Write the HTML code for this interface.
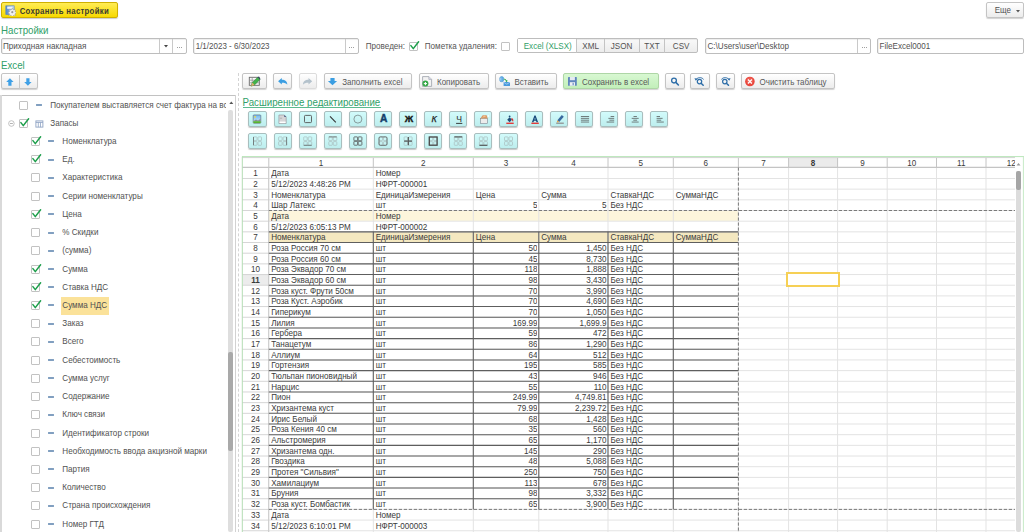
<!DOCTYPE html><html><head><meta charset="utf-8"><style>
html,body{margin:0;padding:0}
body{width:1024px;height:532px;overflow:hidden;position:relative;background:#fff;font-family:"Liberation Sans",sans-serif;color:#515151}
.t{position:absolute;white-space:nowrap}
.r{position:absolute;box-sizing:border-box}
.btn{position:absolute;box-sizing:border-box;border:1px solid #c4c4c4;border-radius:2px;background:linear-gradient(#ffffff,#ececec);box-shadow:0 1px 1px rgba(0,0,0,0.18)}
.fb{position:absolute;box-sizing:border-box;border:1px solid #a9bebe;border-radius:2px;background:linear-gradient(#d2fbfb,#bdeeee);box-shadow:0 1px 1px rgba(0,0,0,0.22)}
.inp{position:absolute;box-sizing:border-box;border:1px solid #bdbdbd;border-radius:2px;background:#fff;box-shadow:inset 1px 1px 1px rgba(0,0,0,0.07)}
.cb{position:absolute;box-sizing:border-box;width:9px;height:9px;border:1px solid #c2c2c2;border-radius:1px;background:#fff}
</style></head><body>
<div class="r" style="left:1px;top:2px;width:117px;height:16px;border:1px solid #cfb000;border-radius:2px;background:linear-gradient(#ffec55,#f7d900);box-shadow:0 1px 1px rgba(0,0,0,0.2)"></div><svg class="r" style="left:4.50px;top:4.50px" width="11" height="11" viewBox="0 0 11 11"><defs><linearGradient id="dg" x1="0" y1="0" x2="1" y2="0"><stop offset="0" stop-color="#4f86cc"/><stop offset="1" stop-color="#b8d4f2"/></linearGradient></defs><rect x="0.8" y="0.8" width="8.4" height="8.8" fill="url(#dg)" stroke="#5d86bb" stroke-width="0.6"/><rect x="2.2" y="1.6" width="5.4" height="2.2" fill="#eef4fb"/><path d="M6.9 3.6 l0.9 0 l0.3 1 l0.9 0.4 l0.9 -0.6 l0.7 0.7 l-0.6 0.9 l0.4 0.9 l1 0.3 l0 1 l-1 0.3 l-0.4 0.9 l0.6 0.9 l-0.7 0.7 l-0.9 -0.6 l-0.9 0.4 l-0.3 1 l-1 0 l-0.3 -1 l-0.9 -0.4 l-0.9 0.6 l-0.7 -0.7 l0.6 -0.9 l-0.4 -0.9 l-1 -0.3 l0 -1 l1 -0.3 l0.4 -0.9 l-0.6 -0.9 l0.7 -0.7 l0.9 0.6 l0.9 -0.4Z" fill="#f0f0f0" stroke="#8a8a8a" stroke-width="0.5"/><circle cx="7.3" cy="7.2" r="1.1" fill="#9a9a9a"/></svg><div class="t" style="left:19.70px;top:7.90px;font-size:7.8px;line-height:7.8px;transform:scaleY(1.16);transform-origin:0 6.60px;letter-spacing:0.27px;color:#3b3b30;font-weight:700;">Сохранить настройки</div><div class="btn" style="left:986px;top:2px;width:38px;height:16px"></div><div class="t" style="left:994.70px;top:7.33px;font-size:8px;line-height:8px;transform:scaleY(1.12);transform-origin:0 6.77px;">Еще</div><svg class="r" style="left:1015.50px;top:9.50px" width="4" height="3" viewBox="0 0 4 3"><path d="M0 0 L4 0 L2 2.5Z" fill="#555"/></svg><div class="t" style="left:1.00px;top:26.29px;font-size:9.7px;line-height:9.7px;transform:scaleY(1.15);transform-origin:0 8.21px;color:#30a068;">Настройки</div><div class="inp" style="left:1px;top:38px;width:186px;height:16px"></div><div class="r" style="left:159.00px;top:39.00px;width:1.00px;height:14.00px;background:#c9c9c9"></div><div class="r" style="left:172.30px;top:39.00px;width:1.00px;height:14.00px;background:#c9c9c9"></div><svg class="r" style="left:164.00px;top:45.00px" width="4" height="3" viewBox="0 0 4 3"><path d="M0 0 L4 0 L2 2.5Z" fill="#444"/></svg><div class="r" style="left:177.00px;top:47.30px;width:1.20px;height:1.20px;background:#a0a0a0"></div><div class="r" style="left:179.00px;top:47.30px;width:1.20px;height:1.20px;background:#a0a0a0"></div><div class="r" style="left:181.00px;top:47.30px;width:1.20px;height:1.20px;background:#a0a0a0"></div><div class="t" style="left:3.00px;top:42.94px;font-size:8.1px;line-height:8.1px;transform:scaleY(1.12);transform-origin:0 6.86px;">Приходная накладная</div><div class="inp" style="left:193px;top:38px;width:165.5px;height:16px"></div><div class="r" style="left:345.00px;top:39.00px;width:1.00px;height:14.00px;background:#c9c9c9"></div><div class="r" style="left:348.80px;top:47.30px;width:1.20px;height:1.20px;background:#a0a0a0"></div><div class="r" style="left:350.80px;top:47.30px;width:1.20px;height:1.20px;background:#a0a0a0"></div><div class="r" style="left:352.80px;top:47.30px;width:1.20px;height:1.20px;background:#a0a0a0"></div><div class="t" style="left:195.70px;top:43.03px;font-size:8px;line-height:8px;transform:scaleY(1.12);transform-origin:0 6.77px;">1/1/2023 - 6/30/2023</div><div class="t" style="left:365.80px;top:42.94px;font-size:8.1px;line-height:8.1px;transform:scaleY(1.12);transform-origin:0 6.86px;color:#555;">Проведен:</div><div class="cb" style="left:409px;top:41.8px;width:9px;height:9px"></div><svg class="r" style="left:409.00px;top:39.80px" width="11" height="11" viewBox="0 0 11 11"><path d="M1.9 5.6 L4.3 8.6 L9.6 1.8" fill="none" stroke="#1c9e4a" stroke-width="1.5" stroke-linecap="round" stroke-linejoin="round"/></svg><div class="t" style="left:424.80px;top:42.94px;font-size:8.1px;line-height:8.1px;transform:scaleY(1.12);transform-origin:0 6.86px;color:#555;">Пометка удаления:</div><div class="cb" style="left:501.2px;top:41.5px;width:9px;height:9px"></div><div class="inp" style="left:517px;top:38.3px;width:180.5px;height:15.2px;background:linear-gradient(#f9f9f9,#ececec)"></div><div class="r" style="left:518.00px;top:39.30px;width:58.40px;height:13.20px;background:#fff"></div><div class="r" style="left:576.20px;top:39.00px;width:1.00px;height:14.00px;background:#c4c4c4"></div><div class="r" style="left:604.00px;top:39.00px;width:1.00px;height:14.00px;background:#c4c4c4"></div><div class="r" style="left:638.60px;top:39.00px;width:1.00px;height:14.00px;background:#c4c4c4"></div><div class="r" style="left:664.00px;top:39.00px;width:1.00px;height:14.00px;background:#c4c4c4"></div><div class="t" style="left:523.70px;top:42.94px;font-size:8.1px;line-height:8.1px;transform:scaleY(1.12);transform-origin:0 6.86px;color:#30a068;">Excel (XLSX)</div><div class="t" style="left:582.30px;top:42.94px;font-size:8.1px;line-height:8.1px;transform:scaleY(1.12);transform-origin:0 6.86px;">XML</div><div class="t" style="left:610.80px;top:42.94px;font-size:8.1px;line-height:8.1px;transform:scaleY(1.12);transform-origin:0 6.86px;">JSON</div><div class="t" style="left:644.30px;top:42.94px;font-size:8.1px;line-height:8.1px;transform:scaleY(1.12);transform-origin:0 6.86px;">TXT</div><div class="t" style="left:672.80px;top:42.94px;font-size:8.1px;line-height:8.1px;transform:scaleY(1.12);transform-origin:0 6.86px;">CSV</div><div class="inp" style="left:704.5px;top:38px;width:166px;height:16px"></div><div class="r" style="left:857.00px;top:39.00px;width:1.00px;height:14.00px;background:#c9c9c9"></div><div class="r" style="left:861.60px;top:47.30px;width:1.20px;height:1.20px;background:#a0a0a0"></div><div class="r" style="left:863.60px;top:47.30px;width:1.20px;height:1.20px;background:#a0a0a0"></div><div class="r" style="left:865.60px;top:47.30px;width:1.20px;height:1.20px;background:#a0a0a0"></div><div class="t" style="left:707.50px;top:42.94px;font-size:8.1px;line-height:8.1px;transform:scaleY(1.12);transform-origin:0 6.86px;">C:\Users\user\Desktop</div><div class="inp" style="left:877.3px;top:38px;width:146.5px;height:16px"></div><div class="t" style="left:879.50px;top:42.94px;font-size:8.1px;line-height:8.1px;transform:scaleY(1.12);transform-origin:0 6.86px;">FileExcel0001</div><div class="t" style="left:1.00px;top:61.29px;font-size:9.7px;line-height:9.7px;transform:scaleY(1.15);transform-origin:0 8.21px;color:#30a068;">Excel</div><div class="btn" style="left:1px;top:73.1px;width:37px;height:16px"></div><div class="r" style="left:19.40px;top:74.60px;width:1.00px;height:14.00px;background:#c8c8c8"></div><svg class="r" style="left:6.00px;top:77.50px" width="8" height="8" viewBox="0 0 8 8"><path d="M3.9 0.2 L7.6 4.0 L5.5 4.0 L5.5 7.8 L2.3 7.8 L2.3 4.0 L0.2 4.0Z" fill="#3fa0e6"/></svg><svg class="r" style="left:24.20px;top:77.50px" width="8" height="8" viewBox="0 0 8 8"><path d="M3.9 7.8 L7.6 4.0 L5.5 4.0 L5.5 0.2 L2.3 0.2 L2.3 4.0 L0.2 4.0Z" fill="#3fa0e6"/></svg><div class="r" style="left:238px;top:73px;width:1px;height:459px;border-left:1px dashed #d4d4d4"></div><div class="r" style="left:0.00px;top:95.00px;width:236.00px;height:1.00px;background:#c2c2c2"></div><div class="r" style="left:0.00px;top:95.00px;width:1.70px;height:437.00px;background:#d9d9d9"></div><div class="r" style="left:234.50px;top:95.00px;width:1.00px;height:437.00px;background:#d2d2d2"></div><div class="r" style="left:228.30px;top:110.00px;width:4.40px;height:422.00px;background:#dedede;border-radius:2px"></div><div class="r" style="left:228.30px;top:352.00px;width:4.40px;height:99.00px;background:#a9a9a9;border-radius:2px"></div><svg class="r" style="left:228.50px;top:101.00px" width="5" height="4" viewBox="0 0 5 4"><path d="M0.3 3 L4.3 3 L2.3 0.6Z" fill="#555"/></svg><div class="cb" style="left:19.20px;top:100.60px"></div><div class="r" style="left:35.90px;top:104.00px;width:6.30px;height:2.00px;background:#819fc0;border-radius:1px;box-shadow:0 0 0.6px #819fc0"></div><div class="t" style="left:50.30px;top:101.54px;font-size:8.1px;line-height:8.1px;transform:scaleY(1.11);transform-origin:0 6.86px;width:176.20px;overflow:hidden;">Покупателем выставляется счет фактура на вс</div><div class="cb" style="left:19.20px;top:118.82px"></div><svg class="r" style="left:19.20px;top:116.82px" width="11" height="11" viewBox="0 0 11 11"><path d="M1.9 5.6 L4.3 8.6 L9.6 1.8" fill="none" stroke="#1c9e4a" stroke-width="1.5" stroke-linecap="round" stroke-linejoin="round"/></svg><svg class="r" style="left:35.00px;top:119.62px" width="9" height="8" viewBox="0 0 9 8"><rect x="0.9" y="0.9" width="7" height="6.2" fill="#fff" stroke="#8fa3c4" stroke-width="0.9"/><line x1="0.9" y1="2.4" x2="7.9" y2="2.4" stroke="#8fa3c4" stroke-width="0.9"/><line x1="3.3" y1="2.4" x2="3.3" y2="7.1" stroke="#8fa3c4" stroke-width="0.8"/><line x1="5.5" y1="2.4" x2="5.5" y2="7.1" stroke="#8fa3c4" stroke-width="0.8"/></svg><svg class="r" style="left:7.50px;top:119.72px" width="7" height="7" viewBox="0 0 7 7"><circle cx="3.4" cy="3.5" r="2.8" fill="none" stroke="#b4b4b4" stroke-width="0.8"/><line x1="1.9" y1="3.5" x2="4.9" y2="3.5" stroke="#a0a0a0" stroke-width="0.8"/></svg><div class="t" style="left:50.30px;top:119.76px;font-size:8.1px;line-height:8.1px;transform:scaleY(1.11);transform-origin:0 6.86px;width:176.20px;overflow:hidden;">Запасы</div><div class="cb" style="left:31.20px;top:137.04px"></div><svg class="r" style="left:31.20px;top:135.04px" width="11" height="11" viewBox="0 0 11 11"><path d="M1.9 5.6 L4.3 8.6 L9.6 1.8" fill="none" stroke="#1c9e4a" stroke-width="1.5" stroke-linecap="round" stroke-linejoin="round"/></svg><div class="r" style="left:47.70px;top:140.00px;width:6.30px;height:2.00px;background:#819fc0;border-radius:1px;box-shadow:0 0 0.6px #819fc0"></div><div class="t" style="left:62.30px;top:137.98px;font-size:8.1px;line-height:8.1px;transform:scaleY(1.11);transform-origin:0 6.86px;">Номенклатура</div><div class="cb" style="left:31.20px;top:155.26px"></div><svg class="r" style="left:31.20px;top:153.26px" width="11" height="11" viewBox="0 0 11 11"><path d="M1.9 5.6 L4.3 8.6 L9.6 1.8" fill="none" stroke="#1c9e4a" stroke-width="1.5" stroke-linecap="round" stroke-linejoin="round"/></svg><div class="r" style="left:47.70px;top:159.00px;width:6.30px;height:2.00px;background:#819fc0;border-radius:1px;box-shadow:0 0 0.6px #819fc0"></div><div class="t" style="left:62.30px;top:156.20px;font-size:8.1px;line-height:8.1px;transform:scaleY(1.11);transform-origin:0 6.86px;">Ед.</div><div class="cb" style="left:31.20px;top:173.48px"></div><div class="r" style="left:47.70px;top:177.00px;width:6.30px;height:2.00px;background:#819fc0;border-radius:1px;box-shadow:0 0 0.6px #819fc0"></div><div class="t" style="left:62.30px;top:174.42px;font-size:8.1px;line-height:8.1px;transform:scaleY(1.11);transform-origin:0 6.86px;">Характеристика</div><div class="cb" style="left:31.20px;top:191.70px"></div><div class="r" style="left:47.70px;top:195.00px;width:6.30px;height:2.00px;background:#819fc0;border-radius:1px;box-shadow:0 0 0.6px #819fc0"></div><div class="t" style="left:62.30px;top:192.64px;font-size:8.1px;line-height:8.1px;transform:scaleY(1.11);transform-origin:0 6.86px;">Серии номенклатуры</div><div class="cb" style="left:31.20px;top:209.92px"></div><svg class="r" style="left:31.20px;top:207.92px" width="11" height="11" viewBox="0 0 11 11"><path d="M1.9 5.6 L4.3 8.6 L9.6 1.8" fill="none" stroke="#1c9e4a" stroke-width="1.5" stroke-linecap="round" stroke-linejoin="round"/></svg><div class="r" style="left:47.70px;top:213.00px;width:6.30px;height:2.00px;background:#819fc0;border-radius:1px;box-shadow:0 0 0.6px #819fc0"></div><div class="t" style="left:62.30px;top:210.86px;font-size:8.1px;line-height:8.1px;transform:scaleY(1.11);transform-origin:0 6.86px;">Цена</div><div class="cb" style="left:31.20px;top:228.14px"></div><div class="r" style="left:47.70px;top:232.00px;width:6.30px;height:2.00px;background:#819fc0;border-radius:1px;box-shadow:0 0 0.6px #819fc0"></div><div class="t" style="left:62.30px;top:229.08px;font-size:8.1px;line-height:8.1px;transform:scaleY(1.11);transform-origin:0 6.86px;">% Скидки</div><div class="cb" style="left:31.20px;top:246.36px"></div><div class="r" style="left:47.70px;top:250.00px;width:6.30px;height:2.00px;background:#819fc0;border-radius:1px;box-shadow:0 0 0.6px #819fc0"></div><div class="t" style="left:62.30px;top:247.30px;font-size:8.1px;line-height:8.1px;transform:scaleY(1.11);transform-origin:0 6.86px;">(сумма)</div><div class="cb" style="left:31.20px;top:264.58px"></div><svg class="r" style="left:31.20px;top:262.58px" width="11" height="11" viewBox="0 0 11 11"><path d="M1.9 5.6 L4.3 8.6 L9.6 1.8" fill="none" stroke="#1c9e4a" stroke-width="1.5" stroke-linecap="round" stroke-linejoin="round"/></svg><div class="r" style="left:47.70px;top:268.00px;width:6.30px;height:2.00px;background:#819fc0;border-radius:1px;box-shadow:0 0 0.6px #819fc0"></div><div class="t" style="left:62.30px;top:265.52px;font-size:8.1px;line-height:8.1px;transform:scaleY(1.11);transform-origin:0 6.86px;">Сумма</div><div class="cb" style="left:31.20px;top:282.80px"></div><svg class="r" style="left:31.20px;top:280.80px" width="11" height="11" viewBox="0 0 11 11"><path d="M1.9 5.6 L4.3 8.6 L9.6 1.8" fill="none" stroke="#1c9e4a" stroke-width="1.5" stroke-linecap="round" stroke-linejoin="round"/></svg><div class="r" style="left:47.70px;top:286.00px;width:6.30px;height:2.00px;background:#819fc0;border-radius:1px;box-shadow:0 0 0.6px #819fc0"></div><div class="t" style="left:62.30px;top:283.74px;font-size:8.1px;line-height:8.1px;transform:scaleY(1.11);transform-origin:0 6.86px;">Ставка НДС</div><div class="r" style="left:61.00px;top:296.62px;width:48.30px;height:18.00px;background:#fbe29a"></div><div class="cb" style="left:31.20px;top:301.02px"></div><svg class="r" style="left:31.20px;top:299.02px" width="11" height="11" viewBox="0 0 11 11"><path d="M1.9 5.6 L4.3 8.6 L9.6 1.8" fill="none" stroke="#1c9e4a" stroke-width="1.5" stroke-linecap="round" stroke-linejoin="round"/></svg><div class="r" style="left:47.70px;top:304.00px;width:6.30px;height:2.00px;background:#819fc0;border-radius:1px;box-shadow:0 0 0.6px #819fc0"></div><div class="t" style="left:62.30px;top:301.96px;font-size:8.1px;line-height:8.1px;transform:scaleY(1.11);transform-origin:0 6.86px;">Сумма НДС</div><div class="cb" style="left:31.20px;top:319.24px"></div><div class="r" style="left:47.70px;top:323.00px;width:6.30px;height:2.00px;background:#819fc0;border-radius:1px;box-shadow:0 0 0.6px #819fc0"></div><div class="t" style="left:62.30px;top:320.18px;font-size:8.1px;line-height:8.1px;transform:scaleY(1.11);transform-origin:0 6.86px;">Заказ</div><div class="cb" style="left:31.20px;top:337.46px"></div><div class="r" style="left:47.70px;top:341.00px;width:6.30px;height:2.00px;background:#819fc0;border-radius:1px;box-shadow:0 0 0.6px #819fc0"></div><div class="t" style="left:62.30px;top:338.40px;font-size:8.1px;line-height:8.1px;transform:scaleY(1.11);transform-origin:0 6.86px;">Всего</div><div class="cb" style="left:31.20px;top:355.68px"></div><div class="r" style="left:47.70px;top:359.00px;width:6.30px;height:2.00px;background:#819fc0;border-radius:1px;box-shadow:0 0 0.6px #819fc0"></div><div class="t" style="left:62.30px;top:356.62px;font-size:8.1px;line-height:8.1px;transform:scaleY(1.11);transform-origin:0 6.86px;">Себестоимость</div><div class="cb" style="left:31.20px;top:373.90px"></div><div class="r" style="left:47.70px;top:377.00px;width:6.30px;height:2.00px;background:#819fc0;border-radius:1px;box-shadow:0 0 0.6px #819fc0"></div><div class="t" style="left:62.30px;top:374.84px;font-size:8.1px;line-height:8.1px;transform:scaleY(1.11);transform-origin:0 6.86px;">Сумма услуг</div><div class="cb" style="left:31.20px;top:392.12px"></div><div class="r" style="left:47.70px;top:396.00px;width:6.30px;height:2.00px;background:#819fc0;border-radius:1px;box-shadow:0 0 0.6px #819fc0"></div><div class="t" style="left:62.30px;top:393.06px;font-size:8.1px;line-height:8.1px;transform:scaleY(1.11);transform-origin:0 6.86px;">Содержание</div><div class="cb" style="left:31.20px;top:410.34px"></div><div class="r" style="left:47.70px;top:414.00px;width:6.30px;height:2.00px;background:#819fc0;border-radius:1px;box-shadow:0 0 0.6px #819fc0"></div><div class="t" style="left:62.30px;top:411.28px;font-size:8.1px;line-height:8.1px;transform:scaleY(1.11);transform-origin:0 6.86px;">Ключ связи</div><div class="cb" style="left:31.20px;top:428.56px"></div><div class="r" style="left:47.70px;top:432.00px;width:6.30px;height:2.00px;background:#819fc0;border-radius:1px;box-shadow:0 0 0.6px #819fc0"></div><div class="t" style="left:62.30px;top:429.50px;font-size:8.1px;line-height:8.1px;transform:scaleY(1.11);transform-origin:0 6.86px;">Идентификатор строки</div><div class="cb" style="left:31.20px;top:446.78px"></div><div class="r" style="left:47.70px;top:450.00px;width:6.30px;height:2.00px;background:#819fc0;border-radius:1px;box-shadow:0 0 0.6px #819fc0"></div><div class="t" style="left:62.30px;top:447.72px;font-size:8.1px;line-height:8.1px;transform:scaleY(1.11);transform-origin:0 6.86px;">Необходимость ввода акцизной марки</div><div class="cb" style="left:31.20px;top:465.00px"></div><div class="r" style="left:47.70px;top:468.00px;width:6.30px;height:2.00px;background:#819fc0;border-radius:1px;box-shadow:0 0 0.6px #819fc0"></div><div class="t" style="left:62.30px;top:465.94px;font-size:8.1px;line-height:8.1px;transform:scaleY(1.11);transform-origin:0 6.86px;">Партия</div><div class="cb" style="left:31.20px;top:483.22px"></div><div class="r" style="left:47.70px;top:487.00px;width:6.30px;height:2.00px;background:#819fc0;border-radius:1px;box-shadow:0 0 0.6px #819fc0"></div><div class="t" style="left:62.30px;top:484.16px;font-size:8.1px;line-height:8.1px;transform:scaleY(1.11);transform-origin:0 6.86px;">Количество</div><div class="cb" style="left:31.20px;top:501.44px"></div><div class="r" style="left:47.70px;top:505.00px;width:6.30px;height:2.00px;background:#819fc0;border-radius:1px;box-shadow:0 0 0.6px #819fc0"></div><div class="t" style="left:62.30px;top:502.38px;font-size:8.1px;line-height:8.1px;transform:scaleY(1.11);transform-origin:0 6.86px;">Страна происхождения</div><div class="cb" style="left:31.20px;top:519.66px"></div><div class="r" style="left:47.70px;top:523.00px;width:6.30px;height:2.00px;background:#819fc0;border-radius:1px;box-shadow:0 0 0.6px #819fc0"></div><div class="t" style="left:62.30px;top:520.60px;font-size:8.1px;line-height:8.1px;transform:scaleY(1.11);transform-origin:0 6.86px;">Номер ГТД</div><div class="btn" style="left:242.10px;top:73.10px;width:25.00px;height:16.00px;"></div><div class="btn" style="left:273.40px;top:73.10px;width:18.60px;height:16.00px;"></div><div class="btn" style="left:298.50px;top:73.10px;width:18.60px;height:16.00px;border-color:#dcdcdc;box-shadow:0 1px 1px rgba(0,0,0,0.08)"></div><div class="btn" style="left:323.50px;top:73.10px;width:88.60px;height:16.00px;"></div><div class="t" style="left:342.25px;top:78.53px;font-size:8px;line-height:8px;transform:scaleY(1.12);transform-origin:0 6.77px;color:#585858;">Заполнить excel</div><div class="btn" style="left:418.50px;top:73.10px;width:70.60px;height:16.00px;"></div><div class="t" style="left:437.00px;top:78.53px;font-size:8px;line-height:8px;transform:scaleY(1.12);transform-origin:0 6.77px;color:#585858;">Копировать</div><div class="btn" style="left:495.30px;top:73.10px;width:61.60px;height:16.00px;"></div><div class="t" style="left:514.50px;top:78.53px;font-size:8px;line-height:8px;transform:scaleY(1.12);transform-origin:0 6.77px;color:#585858;">Вставить</div><div class="btn" style="left:563.25px;top:73.10px;width:96.10px;height:16.00px;background:linear-gradient(#d8f8d2,#c2efba);border-color:#aed6a6"></div><div class="t" style="left:582.00px;top:78.53px;font-size:8px;line-height:8px;transform:scaleY(1.12);transform-origin:0 6.77px;color:#585858;">Сохранить в excel</div><div class="btn" style="left:665.25px;top:73.10px;width:19.35px;height:16.00px;"></div><div class="btn" style="left:690.25px;top:73.10px;width:19.85px;height:16.00px;"></div><div class="btn" style="left:715.75px;top:73.10px;width:19.35px;height:16.00px;"></div><div class="btn" style="left:741.25px;top:73.10px;width:93.60px;height:16.00px;"></div><div class="t" style="left:759.50px;top:78.53px;font-size:8px;line-height:8px;transform:scaleY(1.12);transform-origin:0 6.77px;color:#585858;">Очистить таблицу</div><div class="t" style="left:242.60px;top:97.79px;font-size:9.7px;line-height:9.7px;transform:scaleY(1.15);transform-origin:0 8.21px;color:#30a068;">Расширенное редактирование</div><div class="r" style="left:242.60px;top:107.00px;width:138.20px;height:1.00px;background:#5bbb8f"></div><div class="fb" style="left:248.40px;top:111.10px;width:18.20px;height:16.20px;"></div><div class="fb" style="left:273.50px;top:111.10px;width:18.20px;height:16.20px;"></div><div class="fb" style="left:298.60px;top:111.10px;width:18.20px;height:16.20px;"></div><div class="fb" style="left:323.70px;top:111.10px;width:18.20px;height:16.20px;"></div><div class="fb" style="left:348.80px;top:111.10px;width:18.20px;height:16.20px;"></div><div class="fb" style="left:373.90px;top:111.10px;width:18.20px;height:16.20px;"></div><div class="fb" style="left:399.00px;top:111.10px;width:18.20px;height:16.20px;"></div><div class="fb" style="left:424.10px;top:111.10px;width:18.20px;height:16.20px;"></div><div class="fb" style="left:449.20px;top:111.10px;width:18.20px;height:16.20px;"></div><div class="fb" style="left:474.30px;top:111.10px;width:18.20px;height:16.20px;"></div><div class="fb" style="left:499.40px;top:111.10px;width:18.20px;height:16.20px;"></div><div class="fb" style="left:524.50px;top:111.10px;width:18.20px;height:16.20px;"></div><div class="fb" style="left:549.60px;top:111.10px;width:18.20px;height:16.20px;"></div><div class="fb" style="left:574.70px;top:111.10px;width:18.20px;height:16.20px;"></div><div class="fb" style="left:599.80px;top:111.10px;width:18.20px;height:16.20px;"></div><div class="fb" style="left:624.90px;top:111.10px;width:18.20px;height:16.20px;"></div><div class="fb" style="left:650.00px;top:111.10px;width:18.20px;height:16.20px;"></div><div class="fb" style="left:248.40px;top:133.00px;width:18.20px;height:16.10px;"></div><div class="fb" style="left:273.50px;top:133.00px;width:18.20px;height:16.10px;"></div><div class="fb" style="left:298.60px;top:133.00px;width:18.20px;height:16.10px;"></div><div class="fb" style="left:323.70px;top:133.00px;width:18.20px;height:16.10px;"></div><div class="fb" style="left:348.80px;top:133.00px;width:18.20px;height:16.10px;"></div><div class="fb" style="left:373.90px;top:133.00px;width:18.20px;height:16.10px;"></div><div class="fb" style="left:399.00px;top:133.00px;width:18.20px;height:16.10px;"></div><div class="fb" style="left:424.10px;top:133.00px;width:18.20px;height:16.10px;"></div><div class="fb" style="left:449.20px;top:133.00px;width:18.20px;height:16.10px;"></div><div class="fb" style="left:474.30px;top:133.00px;width:18.20px;height:16.10px;"></div><div class="fb" style="left:499.40px;top:133.00px;width:18.20px;height:16.10px;"></div><svg class="r" style="left:0;top:0" width="1024" height="532" viewBox="0 0 1024 532"><rect x="249.3" y="77.3" width="10" height="8" fill="#fafafa" stroke="#6a6a6a" stroke-width="0.9"/><path d="M249.3 80.2H259.3M249.3 82.8H259.3M252.2 77.3V85.3" stroke="#8a8a8a" stroke-width="0.7"/><path d="M251.2 86.2 L252.3 82.6 L257.6 77.3 L259.9 79.6 L254.6 84.9Z" fill="#41b34b" stroke="#2c7a35" stroke-width="0.5"/><path d="M251.2 86.2 L252.3 82.6 L254.6 84.9Z" fill="#e2ad6b"/><path d="M257.6 77.3 L259.9 79.6 L260.6 78.9 L258.3 76.6Z" fill="#2b3f63"/><path d="M278.1 81.2 L281.8 77.9 L281.8 79.7 C285.2 79.7 287.3 81.3 287.3 84.8 C286.2 83.3 284.6 82.8 281.8 82.8 L281.8 84.6Z" fill="#3b9ee2"/><path d="M312.2 81.2 L308.5 77.9 L308.5 79.7 C305.1 79.7 303 81.3 303 84.8 C304.1 83.3 305.7 82.8 308.5 82.8 L308.5 84.6Z" fill="#b4c2cc"/><path d="M330.4 77.9 H334.6 V81.1 H337.1 L332.5 85.3 L327.9 81.1 H330.4Z" fill="#3b9ee2"/><path d="M422.6 76.6 H428.8 L431.6 79.4 V86.4 H422.6Z" fill="#f3f3f3" stroke="#9aa0a8" stroke-width="0.8"/><path d="M428.8 76.6 V79.4 H431.6" fill="#dde" stroke="#9aa0a8" stroke-width="0.6"/><circle cx="425.4" cy="83.6" r="3" fill="#33a845"/><path d="M425.4 82 V85.2 M423.8 83.6 H427" stroke="#fff" stroke-width="1"/><rect x="499.8" y="76.6" width="3.8" height="5.2" rx="1.6" fill="#62aee8" stroke="#3f8ccc" stroke-width="0.5"/><path d="M500.8 77.6 V80.6" stroke="#cfe8fa" stroke-width="0.7"/><path d="M503.8 79.2 C505.4 79.2 506.2 79.6 506.4 81" fill="none" stroke="#2fa84a" stroke-width="1"/><path d="M505.2 80.6 L506.5 82.2 L507.8 80.6Z" fill="#2fa84a"/><rect x="503.6" y="82" width="6.4" height="4" fill="#4a9ade"/><path d="M503.6 82.2 L506.8 84.2 L510 82.2" fill="none" stroke="#d5e8f8" stroke-width="0.6"/><rect x="568" y="77" width="8.8" height="8.8" rx="0.6" fill="#5f86bd"/><rect x="569.9" y="77" width="5" height="3.2" fill="#e4eaf2"/><rect x="569.8" y="82.2" width="5.2" height="3.6" fill="#eef0f3"/><rect x="572.6" y="82.8" width="1.1" height="2.4" fill="#5f86bd"/><circle cx="674.0" cy="80.6" r="2.4" fill="none" stroke="#2e6ea8" stroke-width="1.3"/><path d="M675.8 82.4 L678.4 85" stroke="#2e6ea8" stroke-width="1.6" stroke-linecap="round"/><circle cx="699.5" cy="81.6" r="2.2" fill="none" stroke="#2e6ea8" stroke-width="1.2"/><path d="M701.1 83.2 L703.2 85.3" stroke="#2e6ea8" stroke-width="1.5" stroke-linecap="round"/><path d="M696.2 79.6 C697.5 77.3 701.5 76.8 703.6 79.4" fill="none" stroke="#2e6ea8" stroke-width="1"/><path d="M694.4 78.2 L697.6 78.6 L695.8 80.8Z" fill="#2e6ea8"/><circle cx="724.8" cy="81.6" r="2.2" fill="none" stroke="#2e6ea8" stroke-width="1.2"/><path d="M726.4 83.2 L728.5 85.3" stroke="#2e6ea8" stroke-width="1.5" stroke-linecap="round"/><path d="M721.4 79.4 C723.5 76.8 727.5 77.3 728.8 79.6" fill="none" stroke="#2e6ea8" stroke-width="1"/><path d="M730.6 78.2 L727.4 78.6 L729.2 80.8Z" fill="#2e6ea8"/><circle cx="749.9" cy="81.5" r="4.8" fill="#e9473d"/><circle cx="749.9" cy="80.5" r="3.2" fill="#f26a60" opacity="0.6"/><path d="M747.9 79.5 L751.9 83.5 M751.9 79.5 L747.9 83.5" stroke="#fff" stroke-width="1.2"/><g transform="translate(0.00 0)"><defs><linearGradient id="sky" x1="0" y1="0" x2="0" y2="1"><stop offset="0" stop-color="#6fb6f0"/><stop offset="1" stop-color="#d9eefc"/></linearGradient></defs><rect x="253.2" y="114.9" width="7.6" height="8.4" rx="0.8" fill="url(#sky)" stroke="#5a6470" stroke-width="0.6"/><circle cx="255.1" cy="116.8" r="0.9" fill="#f2df3a"/><path d="M253.4 121 L256 119.4 L258 120.4 L260.6 118.8 V121.2 H253.4Z" fill="#8a8f96"/><rect x="253.4" y="121.2" width="7.2" height="1.9" fill="#58b42e"/></g><g transform="translate(0.10 0)"><path d="M278.8 115 H284.2 L286.1 116.9 V123.5 H278.8Z" fill="#d6d6d8" stroke="#8d8f96" stroke-width="0.6"/><path d="M284.2 115 V116.9 H286.1Z" fill="#3a4f7a"/><rect x="279.4" y="121.6" width="6.1" height="1.5" fill="#fff"/><path d="M279.8 118.2 H282" stroke="#999" stroke-width="0.6"/></g><g transform="translate(0.20 0)"><rect x="304.3" y="115.4" width="7" height="7.2" rx="0.9" fill="none" stroke="#555" stroke-width="0.9"/></g><g transform="translate(0.30 0)"><path d="M329.7 116.4 L335.5 122.4" stroke="#333" stroke-width="1.1"/></g><g transform="translate(0.40 0)"><circle cx="357.5" cy="119.1" r="4" fill="none" stroke="#6d7777" stroke-width="0.7"/></g><g transform="translate(0.50 0)"><text x="383.3" y="122.2" text-anchor="middle" font-family="Liberation Sans" font-weight="700" font-size="10.2" fill="#143f6b" stroke="#143f6b" stroke-width="0.45">A</text></g><g transform="translate(0.60 0)"><text x="408.4" y="122.2" text-anchor="middle" font-family="Liberation Sans" font-weight="700" font-size="9.4" fill="#161616" stroke="#161616" stroke-width="0.3">Ж</text></g><g transform="translate(0.70 0)"><text x="433.4" y="122.2" text-anchor="middle" font-family="Liberation Sans" font-style="italic" font-size="9" fill="#222" stroke="#222" stroke-width="0.25">К</text></g><g transform="translate(0.80 0)"><text x="458.4" y="122.0" text-anchor="middle" font-family="Liberation Sans" font-size="8.6" fill="#2a2a2a">Ч</text><path d="M455.3 123.4 H461.5" stroke="#2a2a2a" stroke-width="0.9"/></g><g transform="translate(0.90 0)"><rect x="479.6" y="118.6" width="7" height="5" fill="#ececec" stroke="#7d8590" stroke-width="0.6"/><path d="M479.4 118.6 L481.8 115.2 H485.8 L486.8 118.6Z" fill="#d99a66"/><path d="M481.5 117.6 L483.2 115.2 L485.1 116.8Z" fill="#f0c090"/><path d="M486.6 116 H488.4 M487.5 115 V117" stroke="#fff" stroke-width="0.7"/></g><g transform="translate(1.00 0)"><path d="M506.2 119.8 L508.6 117.2 L511 119.8 L508.6 122.2Z" fill="#1e4d78"/><circle cx="508.6" cy="116.4" r="0.9" fill="#1e4d78"/><path d="M510.4 118.6 C511.8 119 512 120.2 511.6 121.2" stroke="#d22" stroke-width="1.1" fill="none"/><rect x="505.3" y="122.6" width="7.4" height="1.4" fill="#e23b3b"/></g><g transform="translate(1.10 0)"><path d="M530.8 122.2 L533.3 115.6 H534.5 L537 122.2 H535.4 L534.9 120.7 H532.9 L532.4 122.2Z M533.3 119.4 H534.5 L533.9 117.6Z" fill="#174a7c" fill-rule="evenodd"/><rect x="530.3" y="122.6" width="7.4" height="1.4" fill="#e23b3b"/></g><g transform="translate(1.20 0)"><path d="M556.2 120.3 L560.6 115.0 L562.6 116.8 L558.0 122.0Z" fill="#38699f"/><path d="M556.2 120.3 L558.0 122.0 L555.6 122.6Z" fill="#e8a040"/><rect x="555.0" y="122.6" width="7.6" height="1.2" fill="#8d8d8d"/></g><g transform="translate(1.30 0)"><path d="M579.60 116.50 H587.80" stroke="#6f7d7d" stroke-width="1"/><path d="M579.60 118.35 H587.80" stroke="#6f7d7d" stroke-width="1"/><path d="M579.60 120.20 H587.80" stroke="#6f7d7d" stroke-width="1"/><path d="M579.60 122.05 H587.80" stroke="#6f7d7d" stroke-width="1"/></g><g transform="translate(1.40 0)"><path d="M609.20 116.50 H612.80" stroke="#6f7d7d" stroke-width="1"/><path d="M607.00 118.35 H612.80" stroke="#6f7d7d" stroke-width="1"/><path d="M608.00 120.20 H612.80" stroke="#6f7d7d" stroke-width="1"/><path d="M605.20 122.05 H612.80" stroke="#6f7d7d" stroke-width="1"/></g><g transform="translate(1.50 0)"><path d="M632.00 116.50 H635.40" stroke="#6f7d7d" stroke-width="1"/><path d="M630.20 118.35 H637.20" stroke="#6f7d7d" stroke-width="1"/><path d="M631.80 120.20 H635.60" stroke="#6f7d7d" stroke-width="1"/><path d="M630.20 122.05 H637.20" stroke="#6f7d7d" stroke-width="1"/></g><g transform="translate(1.60 0)"><path d="M655.00 116.50 H658.40" stroke="#6f7d7d" stroke-width="1"/><path d="M655.00 118.35 H661.00" stroke="#6f7d7d" stroke-width="1"/><path d="M655.00 120.20 H659.60" stroke="#6f7d7d" stroke-width="1"/><path d="M655.00 122.05 H662.20" stroke="#6f7d7d" stroke-width="1"/></g><rect x="253.50" y="136.90" width="3.5" height="3.7" rx="0.55" fill="none" stroke="#a9bdbd" stroke-width="0.7"/><rect x="258.00" y="136.90" width="3.5" height="3.7" rx="0.55" fill="none" stroke="#a9bdbd" stroke-width="0.7"/><rect x="253.50" y="141.60" width="3.5" height="3.7" rx="0.55" fill="none" stroke="#a9bdbd" stroke-width="0.7"/><rect x="258.00" y="141.60" width="3.5" height="3.7" rx="0.55" fill="none" stroke="#a9bdbd" stroke-width="0.7"/><path d="M253.5 136.9 V145.3" stroke="#6d7575" stroke-width="0.9"/><rect x="278.60" y="136.90" width="3.5" height="3.7" rx="0.55" fill="none" stroke="#a9bdbd" stroke-width="0.7"/><rect x="283.10" y="136.90" width="3.5" height="3.7" rx="0.55" fill="none" stroke="#a9bdbd" stroke-width="0.7"/><rect x="278.60" y="141.60" width="3.5" height="3.7" rx="0.55" fill="none" stroke="#a9bdbd" stroke-width="0.7"/><rect x="283.10" y="141.60" width="3.5" height="3.7" rx="0.55" fill="none" stroke="#a9bdbd" stroke-width="0.7"/><path d="M286.6 136.9 V145.3" stroke="#6d7575" stroke-width="0.9"/><rect x="303.70" y="136.90" width="3.5" height="3.7" rx="0.55" fill="none" stroke="#a9bdbd" stroke-width="0.7"/><rect x="308.20" y="136.90" width="3.5" height="3.7" rx="0.55" fill="none" stroke="#a9bdbd" stroke-width="0.7"/><rect x="303.70" y="141.60" width="3.5" height="3.7" rx="0.55" fill="none" stroke="#a9bdbd" stroke-width="0.7"/><rect x="308.20" y="141.60" width="3.5" height="3.7" rx="0.55" fill="none" stroke="#a9bdbd" stroke-width="0.7"/><path d="M303.70000000000005 145.3 H311.70000000000005" stroke="#6d7575" stroke-width="0.9"/><rect x="328.80" y="136.90" width="3.5" height="3.7" rx="0.55" fill="none" stroke="#a9bdbd" stroke-width="0.7"/><rect x="333.30" y="136.90" width="3.5" height="3.7" rx="0.55" fill="none" stroke="#a9bdbd" stroke-width="0.7"/><rect x="328.80" y="141.60" width="3.5" height="3.7" rx="0.55" fill="none" stroke="#a9bdbd" stroke-width="0.7"/><rect x="333.30" y="141.60" width="3.5" height="3.7" rx="0.55" fill="none" stroke="#a9bdbd" stroke-width="0.7"/><path d="M328.80000000000007 136.9 H336.80000000000007" stroke="#6d7575" stroke-width="0.9"/><g fill="none" stroke="#5f6464" stroke-width="0.9"><rect x="353.90000000000003" y="136.9" width="3.8" height="3.9" rx="0.6"/><rect x="358.1" y="136.9" width="3.8" height="3.9" rx="0.6"/><rect x="353.90000000000003" y="141.3" width="3.8" height="3.9" rx="0.6"/><rect x="358.1" y="141.3" width="3.8" height="3.9" rx="0.6"/></g><rect x="379.00" y="136.90" width="3.5" height="3.7" rx="0.55" fill="none" stroke="#a9bdbd" stroke-width="0.7"/><rect x="383.50" y="136.90" width="3.5" height="3.7" rx="0.55" fill="none" stroke="#a9bdbd" stroke-width="0.7"/><rect x="379.00" y="141.60" width="3.5" height="3.7" rx="0.55" fill="none" stroke="#a9bdbd" stroke-width="0.7"/><rect x="383.50" y="141.60" width="3.5" height="3.7" rx="0.55" fill="none" stroke="#a9bdbd" stroke-width="0.7"/><rect x="379.0" y="136.9" width="8" height="8.4" rx="1.4" fill="none" stroke="#626868" stroke-width="0.9"/><rect x="404.10" y="136.90" width="3.5" height="3.7" rx="0.55" fill="none" stroke="#a9bdbd" stroke-width="0.7"/><rect x="408.60" y="136.90" width="3.5" height="3.7" rx="0.55" fill="none" stroke="#a9bdbd" stroke-width="0.7"/><rect x="404.10" y="141.60" width="3.5" height="3.7" rx="0.55" fill="none" stroke="#a9bdbd" stroke-width="0.7"/><rect x="408.60" y="141.60" width="3.5" height="3.7" rx="0.55" fill="none" stroke="#a9bdbd" stroke-width="0.7"/><path d="M408.35 136.9 V145.3" stroke="#555a5a" stroke-width="1.2"/><path d="M404.1 141.1 H412.1" stroke="#555a5a" stroke-width="1.2"/><rect x="429.20" y="136.90" width="3.5" height="3.7" rx="0.55" fill="none" stroke="#a9bdbd" stroke-width="0.7"/><rect x="433.70" y="136.90" width="3.5" height="3.7" rx="0.55" fill="none" stroke="#a9bdbd" stroke-width="0.7"/><rect x="429.20" y="141.60" width="3.5" height="3.7" rx="0.55" fill="none" stroke="#a9bdbd" stroke-width="0.7"/><rect x="433.70" y="141.60" width="3.5" height="3.7" rx="0.55" fill="none" stroke="#a9bdbd" stroke-width="0.7"/><rect x="429.30000000000007" y="137.0" width="7.8" height="8.2" fill="none" stroke="#4a4a4a" stroke-width="1.3"/><rect x="454.30" y="136.90" width="3.5" height="3.7" rx="0.55" fill="none" stroke="#a9bdbd" stroke-width="0.7"/><rect x="458.80" y="136.90" width="3.5" height="3.7" rx="0.55" fill="none" stroke="#a9bdbd" stroke-width="0.7"/><rect x="454.30" y="141.60" width="3.5" height="3.7" rx="0.55" fill="none" stroke="#a9bdbd" stroke-width="0.7"/><rect x="458.80" y="141.60" width="3.5" height="3.7" rx="0.55" fill="none" stroke="#a9bdbd" stroke-width="0.7"/><path d="M454.30000000000007 136.9 H462.30000000000007" stroke="#555a5a" stroke-width="1.2"/><rect x="479.40" y="136.90" width="3.5" height="3.7" rx="0.55" fill="none" stroke="#a9bdbd" stroke-width="0.7"/><rect x="483.90" y="136.90" width="3.5" height="3.7" rx="0.55" fill="none" stroke="#a9bdbd" stroke-width="0.7"/><rect x="479.40" y="141.60" width="3.5" height="3.7" rx="0.55" fill="none" stroke="#a9bdbd" stroke-width="0.7"/><rect x="483.90" y="141.60" width="3.5" height="3.7" rx="0.55" fill="none" stroke="#a9bdbd" stroke-width="0.7"/><path d="M479.40000000000003 145.3 H487.40000000000003" stroke="#555a5a" stroke-width="1.2"/><rect x="504.50" y="136.90" width="3.5" height="3.7" rx="0.55" fill="none" stroke="#a9bdbd" stroke-width="0.7"/><rect x="509.00" y="136.90" width="3.5" height="3.7" rx="0.55" fill="none" stroke="#a9bdbd" stroke-width="0.7"/><rect x="504.50" y="141.60" width="3.5" height="3.7" rx="0.55" fill="none" stroke="#a9bdbd" stroke-width="0.7"/><rect x="509.00" y="141.60" width="3.5" height="3.7" rx="0.55" fill="none" stroke="#a9bdbd" stroke-width="0.7"/></svg><div class="r" style="left:268.80px;top:210.20px;width:469.60px;height:10.68px;background:#fdf6dc"></div><div class="r" style="left:268.80px;top:231.55px;width:469.60px;height:10.68px;background:#f4e8c0"></div><div class="r" style="left:242.80px;top:274.25px;width:26.00px;height:10.68px;background:#ececec"></div><div class="r" style="left:788.60px;top:157.50px;width:49.00px;height:10.00px;background:#ebebeb"></div><svg class="r" style="left:0;top:0" width="1024" height="532" viewBox="0 0 1024 532"><path d="M268.80 178.48 L1015.00 178.48" stroke="#e3e3e3" stroke-width="1.0" /><path d="M242.30 178.48 L268.80 178.48" stroke="#d6d6d6" stroke-width="1.0" /><path d="M268.80 189.15 L1015.00 189.15" stroke="#e3e3e3" stroke-width="1.0" /><path d="M242.30 189.15 L268.80 189.15" stroke="#d6d6d6" stroke-width="1.0" /><path d="M268.80 199.83 L1015.00 199.83" stroke="#e3e3e3" stroke-width="1.0" /><path d="M242.30 199.83 L268.80 199.83" stroke="#d6d6d6" stroke-width="1.0" /><path d="M268.80 210.50 L1015.00 210.50" stroke="#e3e3e3" stroke-width="1.0" /><path d="M242.30 210.50 L268.80 210.50" stroke="#d6d6d6" stroke-width="1.0" /><path d="M268.80 221.18 L1015.00 221.18" stroke="#e3e3e3" stroke-width="1.0" /><path d="M242.30 221.18 L268.80 221.18" stroke="#d6d6d6" stroke-width="1.0" /><path d="M268.80 231.85 L1015.00 231.85" stroke="#e3e3e3" stroke-width="1.0" /><path d="M242.30 231.85 L268.80 231.85" stroke="#d6d6d6" stroke-width="1.0" /><path d="M268.80 242.53 L1015.00 242.53" stroke="#e3e3e3" stroke-width="1.0" /><path d="M242.30 242.53 L268.80 242.53" stroke="#d6d6d6" stroke-width="1.0" /><path d="M268.80 253.20 L1015.00 253.20" stroke="#e3e3e3" stroke-width="1.0" /><path d="M242.30 253.20 L268.80 253.20" stroke="#d6d6d6" stroke-width="1.0" /><path d="M268.80 263.88 L1015.00 263.88" stroke="#e3e3e3" stroke-width="1.0" /><path d="M242.30 263.88 L268.80 263.88" stroke="#d6d6d6" stroke-width="1.0" /><path d="M268.80 274.55 L1015.00 274.55" stroke="#e3e3e3" stroke-width="1.0" /><path d="M242.30 274.55 L268.80 274.55" stroke="#d6d6d6" stroke-width="1.0" /><path d="M268.80 285.23 L1015.00 285.23" stroke="#e3e3e3" stroke-width="1.0" /><path d="M242.30 285.23 L268.80 285.23" stroke="#d6d6d6" stroke-width="1.0" /><path d="M268.80 295.90 L1015.00 295.90" stroke="#e3e3e3" stroke-width="1.0" /><path d="M242.30 295.90 L268.80 295.90" stroke="#d6d6d6" stroke-width="1.0" /><path d="M268.80 306.57 L1015.00 306.57" stroke="#e3e3e3" stroke-width="1.0" /><path d="M242.30 306.57 L268.80 306.57" stroke="#d6d6d6" stroke-width="1.0" /><path d="M268.80 317.25 L1015.00 317.25" stroke="#e3e3e3" stroke-width="1.0" /><path d="M242.30 317.25 L268.80 317.25" stroke="#d6d6d6" stroke-width="1.0" /><path d="M268.80 327.93 L1015.00 327.93" stroke="#e3e3e3" stroke-width="1.0" /><path d="M242.30 327.93 L268.80 327.93" stroke="#d6d6d6" stroke-width="1.0" /><path d="M268.80 338.60 L1015.00 338.60" stroke="#e3e3e3" stroke-width="1.0" /><path d="M242.30 338.60 L268.80 338.60" stroke="#d6d6d6" stroke-width="1.0" /><path d="M268.80 349.28 L1015.00 349.28" stroke="#e3e3e3" stroke-width="1.0" /><path d="M242.30 349.28 L268.80 349.28" stroke="#d6d6d6" stroke-width="1.0" /><path d="M268.80 359.95 L1015.00 359.95" stroke="#e3e3e3" stroke-width="1.0" /><path d="M242.30 359.95 L268.80 359.95" stroke="#d6d6d6" stroke-width="1.0" /><path d="M268.80 370.63 L1015.00 370.63" stroke="#e3e3e3" stroke-width="1.0" /><path d="M242.30 370.63 L268.80 370.63" stroke="#d6d6d6" stroke-width="1.0" /><path d="M268.80 381.30 L1015.00 381.30" stroke="#e3e3e3" stroke-width="1.0" /><path d="M242.30 381.30 L268.80 381.30" stroke="#d6d6d6" stroke-width="1.0" /><path d="M268.80 391.98 L1015.00 391.98" stroke="#e3e3e3" stroke-width="1.0" /><path d="M242.30 391.98 L268.80 391.98" stroke="#d6d6d6" stroke-width="1.0" /><path d="M268.80 402.65 L1015.00 402.65" stroke="#e3e3e3" stroke-width="1.0" /><path d="M242.30 402.65 L268.80 402.65" stroke="#d6d6d6" stroke-width="1.0" /><path d="M268.80 413.32 L1015.00 413.32" stroke="#e3e3e3" stroke-width="1.0" /><path d="M242.30 413.32 L268.80 413.32" stroke="#d6d6d6" stroke-width="1.0" /><path d="M268.80 424.00 L1015.00 424.00" stroke="#e3e3e3" stroke-width="1.0" /><path d="M242.30 424.00 L268.80 424.00" stroke="#d6d6d6" stroke-width="1.0" /><path d="M268.80 434.68 L1015.00 434.68" stroke="#e3e3e3" stroke-width="1.0" /><path d="M242.30 434.68 L268.80 434.68" stroke="#d6d6d6" stroke-width="1.0" /><path d="M268.80 445.35 L1015.00 445.35" stroke="#e3e3e3" stroke-width="1.0" /><path d="M242.30 445.35 L268.80 445.35" stroke="#d6d6d6" stroke-width="1.0" /><path d="M268.80 456.03 L1015.00 456.03" stroke="#e3e3e3" stroke-width="1.0" /><path d="M242.30 456.03 L268.80 456.03" stroke="#d6d6d6" stroke-width="1.0" /><path d="M268.80 466.70 L1015.00 466.70" stroke="#e3e3e3" stroke-width="1.0" /><path d="M242.30 466.70 L268.80 466.70" stroke="#d6d6d6" stroke-width="1.0" /><path d="M268.80 477.38 L1015.00 477.38" stroke="#e3e3e3" stroke-width="1.0" /><path d="M242.30 477.38 L268.80 477.38" stroke="#d6d6d6" stroke-width="1.0" /><path d="M268.80 488.05 L1015.00 488.05" stroke="#e3e3e3" stroke-width="1.0" /><path d="M242.30 488.05 L268.80 488.05" stroke="#d6d6d6" stroke-width="1.0" /><path d="M268.80 498.73 L1015.00 498.73" stroke="#e3e3e3" stroke-width="1.0" /><path d="M242.30 498.73 L268.80 498.73" stroke="#d6d6d6" stroke-width="1.0" /><path d="M268.80 509.40 L1015.00 509.40" stroke="#e3e3e3" stroke-width="1.0" /><path d="M242.30 509.40 L268.80 509.40" stroke="#d6d6d6" stroke-width="1.0" /><path d="M268.80 520.08 L1015.00 520.08" stroke="#e3e3e3" stroke-width="1.0" /><path d="M242.30 520.08 L268.80 520.08" stroke="#d6d6d6" stroke-width="1.0" /><path d="M268.80 530.75 L1015.00 530.75" stroke="#e3e3e3" stroke-width="1.0" /><path d="M242.30 530.75 L268.80 530.75" stroke="#d6d6d6" stroke-width="1.0" /><path d="M373.30 167.50 L373.30 532.00" stroke="#e3e3e3" stroke-width="1.0" /><path d="M473.30 167.50 L473.30 532.00" stroke="#e3e3e3" stroke-width="1.0" /><path d="M538.80 167.50 L538.80 532.00" stroke="#e3e3e3" stroke-width="1.0" /><path d="M608.00 167.50 L608.00 532.00" stroke="#e3e3e3" stroke-width="1.0" /><path d="M673.30 167.50 L673.30 532.00" stroke="#e3e3e3" stroke-width="1.0" /><path d="M738.40 167.50 L738.40 532.00" stroke="#e3e3e3" stroke-width="1.0" /><path d="M788.60 167.50 L788.60 532.00" stroke="#e3e3e3" stroke-width="1.0" /><path d="M837.60 167.50 L837.60 532.00" stroke="#e3e3e3" stroke-width="1.0" /><path d="M887.20 167.50 L887.20 532.00" stroke="#e3e3e3" stroke-width="1.0" /><path d="M936.50 167.50 L936.50 532.00" stroke="#e3e3e3" stroke-width="1.0" /><path d="M986.00 167.50 L986.00 532.00" stroke="#e3e3e3" stroke-width="1.0" /><path d="M268.80 157.50 L268.80 167.40" stroke="#c4c4c4" stroke-width="1.0" /><path d="M373.30 157.50 L373.30 167.40" stroke="#c4c4c4" stroke-width="1.0" /><path d="M473.30 157.50 L473.30 167.40" stroke="#c4c4c4" stroke-width="1.0" /><path d="M538.80 157.50 L538.80 167.40" stroke="#c4c4c4" stroke-width="1.0" /><path d="M608.00 157.50 L608.00 167.40" stroke="#c4c4c4" stroke-width="1.0" /><path d="M673.30 157.50 L673.30 167.40" stroke="#c4c4c4" stroke-width="1.0" /><path d="M738.40 157.50 L738.40 167.40" stroke="#c4c4c4" stroke-width="1.0" /><path d="M788.60 157.50 L788.60 167.40" stroke="#c4c4c4" stroke-width="1.0" /><path d="M837.60 157.50 L837.60 167.40" stroke="#c4c4c4" stroke-width="1.0" /><path d="M887.20 157.50 L887.20 167.40" stroke="#c4c4c4" stroke-width="1.0" /><path d="M936.50 157.50 L936.50 167.40" stroke="#c4c4c4" stroke-width="1.0" /><path d="M986.00 157.50 L986.00 167.40" stroke="#c4c4c4" stroke-width="1.0" /><path d="M242.30 167.40 L1015.00 167.40" stroke="#c4c4c4" stroke-width="1.3" /><path d="M242.30 157.60 L1015.00 157.60" stroke="#d3d3d3" stroke-width="1.0" /><path d="M268.70 167.50 L268.70 532.00" stroke="#cbcbcb" stroke-width="1.2" /><path d="M242.00 156.60 L1024.00 156.60" stroke="#b9e6b9" stroke-width="1.0" /><path d="M242.30 156.60 L242.30 532.00" stroke="#b3ddb3" stroke-width="1.0" /><path d="M1023.40 156.60 L1023.40 532.00" stroke="#c6eac6" stroke-width="1.0" /><path d="M268.80 231.85 L738.40 231.85" stroke="#5e5e5e" stroke-width="1.05" /><path d="M268.80 242.53 L738.40 242.53" stroke="#5e5e5e" stroke-width="1.05" /><path d="M268.80 253.20 L738.40 253.20" stroke="#5e5e5e" stroke-width="1.05" /><path d="M268.80 263.88 L738.40 263.88" stroke="#5e5e5e" stroke-width="1.05" /><path d="M268.80 274.55 L738.40 274.55" stroke="#5e5e5e" stroke-width="1.05" /><path d="M268.80 285.23 L738.40 285.23" stroke="#5e5e5e" stroke-width="1.05" /><path d="M268.80 295.90 L738.40 295.90" stroke="#5e5e5e" stroke-width="1.05" /><path d="M268.80 306.57 L738.40 306.57" stroke="#5e5e5e" stroke-width="1.05" /><path d="M268.80 317.25 L738.40 317.25" stroke="#5e5e5e" stroke-width="1.05" /><path d="M268.80 327.93 L738.40 327.93" stroke="#5e5e5e" stroke-width="1.05" /><path d="M268.80 338.60 L738.40 338.60" stroke="#5e5e5e" stroke-width="1.05" /><path d="M268.80 349.28 L738.40 349.28" stroke="#5e5e5e" stroke-width="1.05" /><path d="M268.80 359.95 L738.40 359.95" stroke="#5e5e5e" stroke-width="1.05" /><path d="M268.80 370.63 L738.40 370.63" stroke="#5e5e5e" stroke-width="1.05" /><path d="M268.80 381.30 L738.40 381.30" stroke="#5e5e5e" stroke-width="1.05" /><path d="M268.80 391.98 L738.40 391.98" stroke="#5e5e5e" stroke-width="1.05" /><path d="M268.80 402.65 L738.40 402.65" stroke="#5e5e5e" stroke-width="1.05" /><path d="M268.80 413.32 L738.40 413.32" stroke="#5e5e5e" stroke-width="1.05" /><path d="M268.80 424.00 L738.40 424.00" stroke="#5e5e5e" stroke-width="1.05" /><path d="M268.80 434.68 L738.40 434.68" stroke="#5e5e5e" stroke-width="1.05" /><path d="M268.80 445.35 L738.40 445.35" stroke="#5e5e5e" stroke-width="1.05" /><path d="M268.80 456.03 L738.40 456.03" stroke="#5e5e5e" stroke-width="1.05" /><path d="M268.80 466.70 L738.40 466.70" stroke="#5e5e5e" stroke-width="1.05" /><path d="M268.80 477.38 L738.40 477.38" stroke="#5e5e5e" stroke-width="1.05" /><path d="M268.80 488.05 L738.40 488.05" stroke="#5e5e5e" stroke-width="1.05" /><path d="M268.80 498.73 L738.40 498.73" stroke="#5e5e5e" stroke-width="1.05" /><path d="M373.30 231.85 L373.30 509.40" stroke="#5e5e5e" stroke-width="1.05" /><path d="M473.30 231.85 L473.30 509.40" stroke="#5e5e5e" stroke-width="1.05" /><path d="M538.80 231.85 L538.80 509.40" stroke="#5e5e5e" stroke-width="1.05" /><path d="M608.00 231.85 L608.00 509.40" stroke="#5e5e5e" stroke-width="1.05" /><path d="M673.30 231.85 L673.30 509.40" stroke="#5e5e5e" stroke-width="1.05" /><path d="M268.80 210.50 L1015.00 210.50" stroke="#7a7a7a" stroke-width="1.0" stroke-dasharray="3.2 1.8"/><path d="M268.80 509.40 L1015.00 509.40" stroke="#7a7a7a" stroke-width="1.0" stroke-dasharray="3.2 1.8"/><path d="M738.40 167.50 L738.40 532.00" stroke="#7a7a7a" stroke-width="1.0" stroke-dasharray="3.2 1.8"/></svg><div class="r" style="left:786.00px;top:272.00px;width:54.20px;height:15.00px;border:2px solid #f6d055;background:#fff"></div><div class="r" style="left:1016.30px;top:171.00px;width:4.60px;height:361.00px;background:#dcdcdc;border-radius:2px"></div><div class="r" style="left:1016.30px;top:171.00px;width:4.60px;height:19.00px;background:#a6a6a6;border-radius:2px"></div><svg class="r" style="left:1016.00px;top:162.00px" width="5" height="4" viewBox="0 0 5 4"><path d="M0.5 3.5 L4.5 3.5 L2.5 1Z" fill="#999"/></svg><div class="t" style="left:301.05px;top:160.34px;font-size:8.1px;line-height:8.1px;transform:scaleY(1.16);transform-origin:0 6.86px;color:#3a3a3a;width:40.00px;overflow:hidden;text-align:center;">1</div><div class="t" style="left:403.30px;top:160.34px;font-size:8.1px;line-height:8.1px;transform:scaleY(1.16);transform-origin:0 6.86px;color:#3a3a3a;width:40.00px;overflow:hidden;text-align:center;">2</div><div class="t" style="left:486.05px;top:160.34px;font-size:8.1px;line-height:8.1px;transform:scaleY(1.16);transform-origin:0 6.86px;color:#3a3a3a;width:40.00px;overflow:hidden;text-align:center;">3</div><div class="t" style="left:553.40px;top:160.34px;font-size:8.1px;line-height:8.1px;transform:scaleY(1.16);transform-origin:0 6.86px;color:#3a3a3a;width:40.00px;overflow:hidden;text-align:center;">4</div><div class="t" style="left:620.65px;top:160.34px;font-size:8.1px;line-height:8.1px;transform:scaleY(1.16);transform-origin:0 6.86px;color:#3a3a3a;width:40.00px;overflow:hidden;text-align:center;">5</div><div class="t" style="left:685.85px;top:160.34px;font-size:8.1px;line-height:8.1px;transform:scaleY(1.16);transform-origin:0 6.86px;color:#3a3a3a;width:40.00px;overflow:hidden;text-align:center;">6</div><div class="t" style="left:743.50px;top:160.34px;font-size:8.1px;line-height:8.1px;transform:scaleY(1.16);transform-origin:0 6.86px;color:#3a3a3a;width:40.00px;overflow:hidden;text-align:center;">7</div><div class="t" style="left:793.10px;top:160.34px;font-size:8.1px;line-height:8.1px;transform:scaleY(1.16);transform-origin:0 6.86px;color:#3a3a3a;font-weight:700;width:40.00px;overflow:hidden;text-align:center;">8</div><div class="t" style="left:842.40px;top:160.34px;font-size:8.1px;line-height:8.1px;transform:scaleY(1.16);transform-origin:0 6.86px;color:#3a3a3a;width:40.00px;overflow:hidden;text-align:center;">9</div><div class="t" style="left:891.85px;top:160.34px;font-size:8.1px;line-height:8.1px;transform:scaleY(1.16);transform-origin:0 6.86px;color:#3a3a3a;width:40.00px;overflow:hidden;text-align:center;">10</div><div class="t" style="left:941.25px;top:160.34px;font-size:8.1px;line-height:8.1px;transform:scaleY(1.16);transform-origin:0 6.86px;color:#3a3a3a;width:40.00px;overflow:hidden;text-align:center;">11</div><div class="t" style="left:1006.80px;top:160.34px;font-size:8.1px;line-height:8.1px;transform:scaleY(1.16);transform-origin:0 6.86px;color:#3a3a3a;width:8.20px;overflow:hidden;">12</div><div class="t" style="left:240.60px;top:170.24px;font-size:8.1px;line-height:8.1px;transform:scaleY(1.16);transform-origin:0 6.86px;color:#3a3a3a;width:30.00px;overflow:hidden;text-align:center;">1</div><div class="t" style="left:240.60px;top:180.92px;font-size:8.1px;line-height:8.1px;transform:scaleY(1.16);transform-origin:0 6.86px;color:#3a3a3a;width:30.00px;overflow:hidden;text-align:center;">2</div><div class="t" style="left:240.60px;top:191.59px;font-size:8.1px;line-height:8.1px;transform:scaleY(1.16);transform-origin:0 6.86px;color:#3a3a3a;width:30.00px;overflow:hidden;text-align:center;">3</div><div class="t" style="left:240.60px;top:202.27px;font-size:8.1px;line-height:8.1px;transform:scaleY(1.16);transform-origin:0 6.86px;color:#3a3a3a;width:30.00px;overflow:hidden;text-align:center;">4</div><div class="t" style="left:240.60px;top:212.94px;font-size:8.1px;line-height:8.1px;transform:scaleY(1.16);transform-origin:0 6.86px;color:#3a3a3a;width:30.00px;overflow:hidden;text-align:center;">5</div><div class="t" style="left:240.60px;top:223.62px;font-size:8.1px;line-height:8.1px;transform:scaleY(1.16);transform-origin:0 6.86px;color:#3a3a3a;width:30.00px;overflow:hidden;text-align:center;">6</div><div class="t" style="left:240.60px;top:234.29px;font-size:8.1px;line-height:8.1px;transform:scaleY(1.16);transform-origin:0 6.86px;color:#3a3a3a;width:30.00px;overflow:hidden;text-align:center;">7</div><div class="t" style="left:240.60px;top:244.97px;font-size:8.1px;line-height:8.1px;transform:scaleY(1.16);transform-origin:0 6.86px;color:#3a3a3a;width:30.00px;overflow:hidden;text-align:center;">8</div><div class="t" style="left:240.60px;top:255.64px;font-size:8.1px;line-height:8.1px;transform:scaleY(1.16);transform-origin:0 6.86px;color:#3a3a3a;width:30.00px;overflow:hidden;text-align:center;">9</div><div class="t" style="left:240.60px;top:266.32px;font-size:8.1px;line-height:8.1px;transform:scaleY(1.16);transform-origin:0 6.86px;color:#3a3a3a;width:30.00px;overflow:hidden;text-align:center;">10</div><div class="t" style="left:240.60px;top:276.99px;font-size:8.1px;line-height:8.1px;transform:scaleY(1.16);transform-origin:0 6.86px;color:#3a3a3a;font-weight:700;width:30.00px;overflow:hidden;text-align:center;">11</div><div class="t" style="left:240.60px;top:287.67px;font-size:8.1px;line-height:8.1px;transform:scaleY(1.16);transform-origin:0 6.86px;color:#3a3a3a;width:30.00px;overflow:hidden;text-align:center;">12</div><div class="t" style="left:240.60px;top:298.34px;font-size:8.1px;line-height:8.1px;transform:scaleY(1.16);transform-origin:0 6.86px;color:#3a3a3a;width:30.00px;overflow:hidden;text-align:center;">13</div><div class="t" style="left:240.60px;top:309.02px;font-size:8.1px;line-height:8.1px;transform:scaleY(1.16);transform-origin:0 6.86px;color:#3a3a3a;width:30.00px;overflow:hidden;text-align:center;">14</div><div class="t" style="left:240.60px;top:319.69px;font-size:8.1px;line-height:8.1px;transform:scaleY(1.16);transform-origin:0 6.86px;color:#3a3a3a;width:30.00px;overflow:hidden;text-align:center;">15</div><div class="t" style="left:240.60px;top:330.37px;font-size:8.1px;line-height:8.1px;transform:scaleY(1.16);transform-origin:0 6.86px;color:#3a3a3a;width:30.00px;overflow:hidden;text-align:center;">16</div><div class="t" style="left:240.60px;top:341.04px;font-size:8.1px;line-height:8.1px;transform:scaleY(1.16);transform-origin:0 6.86px;color:#3a3a3a;width:30.00px;overflow:hidden;text-align:center;">17</div><div class="t" style="left:240.60px;top:351.72px;font-size:8.1px;line-height:8.1px;transform:scaleY(1.16);transform-origin:0 6.86px;color:#3a3a3a;width:30.00px;overflow:hidden;text-align:center;">18</div><div class="t" style="left:240.60px;top:362.39px;font-size:8.1px;line-height:8.1px;transform:scaleY(1.16);transform-origin:0 6.86px;color:#3a3a3a;width:30.00px;overflow:hidden;text-align:center;">19</div><div class="t" style="left:240.60px;top:373.07px;font-size:8.1px;line-height:8.1px;transform:scaleY(1.16);transform-origin:0 6.86px;color:#3a3a3a;width:30.00px;overflow:hidden;text-align:center;">20</div><div class="t" style="left:240.60px;top:383.74px;font-size:8.1px;line-height:8.1px;transform:scaleY(1.16);transform-origin:0 6.86px;color:#3a3a3a;width:30.00px;overflow:hidden;text-align:center;">21</div><div class="t" style="left:240.60px;top:394.42px;font-size:8.1px;line-height:8.1px;transform:scaleY(1.16);transform-origin:0 6.86px;color:#3a3a3a;width:30.00px;overflow:hidden;text-align:center;">22</div><div class="t" style="left:240.60px;top:405.09px;font-size:8.1px;line-height:8.1px;transform:scaleY(1.16);transform-origin:0 6.86px;color:#3a3a3a;width:30.00px;overflow:hidden;text-align:center;">23</div><div class="t" style="left:240.60px;top:415.77px;font-size:8.1px;line-height:8.1px;transform:scaleY(1.16);transform-origin:0 6.86px;color:#3a3a3a;width:30.00px;overflow:hidden;text-align:center;">24</div><div class="t" style="left:240.60px;top:426.44px;font-size:8.1px;line-height:8.1px;transform:scaleY(1.16);transform-origin:0 6.86px;color:#3a3a3a;width:30.00px;overflow:hidden;text-align:center;">25</div><div class="t" style="left:240.60px;top:437.12px;font-size:8.1px;line-height:8.1px;transform:scaleY(1.16);transform-origin:0 6.86px;color:#3a3a3a;width:30.00px;overflow:hidden;text-align:center;">26</div><div class="t" style="left:240.60px;top:447.79px;font-size:8.1px;line-height:8.1px;transform:scaleY(1.16);transform-origin:0 6.86px;color:#3a3a3a;width:30.00px;overflow:hidden;text-align:center;">27</div><div class="t" style="left:240.60px;top:458.47px;font-size:8.1px;line-height:8.1px;transform:scaleY(1.16);transform-origin:0 6.86px;color:#3a3a3a;width:30.00px;overflow:hidden;text-align:center;">28</div><div class="t" style="left:240.60px;top:469.14px;font-size:8.1px;line-height:8.1px;transform:scaleY(1.16);transform-origin:0 6.86px;color:#3a3a3a;width:30.00px;overflow:hidden;text-align:center;">29</div><div class="t" style="left:240.60px;top:479.82px;font-size:8.1px;line-height:8.1px;transform:scaleY(1.16);transform-origin:0 6.86px;color:#3a3a3a;width:30.00px;overflow:hidden;text-align:center;">30</div><div class="t" style="left:240.60px;top:490.49px;font-size:8.1px;line-height:8.1px;transform:scaleY(1.16);transform-origin:0 6.86px;color:#3a3a3a;width:30.00px;overflow:hidden;text-align:center;">31</div><div class="t" style="left:240.60px;top:501.17px;font-size:8.1px;line-height:8.1px;transform:scaleY(1.16);transform-origin:0 6.86px;color:#3a3a3a;width:30.00px;overflow:hidden;text-align:center;">32</div><div class="t" style="left:240.60px;top:511.84px;font-size:8.1px;line-height:8.1px;transform:scaleY(1.16);transform-origin:0 6.86px;color:#3a3a3a;width:30.00px;overflow:hidden;text-align:center;">33</div><div class="t" style="left:240.60px;top:522.52px;font-size:8.1px;line-height:8.1px;transform:scaleY(1.16);transform-origin:0 6.86px;color:#3a3a3a;width:30.00px;overflow:hidden;text-align:center;">34</div><div class="t" style="left:271.20px;top:170.24px;font-size:8.1px;line-height:8.1px;transform:scaleY(1.16);transform-origin:0 6.86px;color:#3a3a3a;">Дата</div><div class="t" style="left:375.70px;top:170.24px;font-size:8.1px;line-height:8.1px;transform:scaleY(1.16);transform-origin:0 6.86px;color:#3a3a3a;">Номер</div><div class="t" style="left:271.20px;top:180.92px;font-size:8.1px;line-height:8.1px;transform:scaleY(1.16);transform-origin:0 6.86px;color:#3a3a3a;">5/12/2023 4:48:26 PM</div><div class="t" style="left:375.70px;top:180.92px;font-size:8.1px;line-height:8.1px;transform:scaleY(1.16);transform-origin:0 6.86px;color:#3a3a3a;">НФРТ-000001</div><div class="t" style="left:271.20px;top:191.59px;font-size:8.1px;line-height:8.1px;transform:scaleY(1.16);transform-origin:0 6.86px;color:#3a3a3a;">Номенклатура</div><div class="t" style="left:375.70px;top:191.59px;font-size:8.1px;line-height:8.1px;transform:scaleY(1.16);transform-origin:0 6.86px;color:#3a3a3a;">ЕдиницаИзмерения</div><div class="t" style="left:475.70px;top:191.59px;font-size:8.1px;line-height:8.1px;transform:scaleY(1.16);transform-origin:0 6.86px;color:#3a3a3a;">Цена</div><div class="t" style="left:541.20px;top:191.59px;font-size:8.1px;line-height:8.1px;transform:scaleY(1.16);transform-origin:0 6.86px;color:#3a3a3a;">Сумма</div><div class="t" style="left:610.40px;top:191.59px;font-size:8.1px;line-height:8.1px;transform:scaleY(1.16);transform-origin:0 6.86px;color:#3a3a3a;">СтавкаНДС</div><div class="t" style="left:675.70px;top:191.59px;font-size:8.1px;line-height:8.1px;transform:scaleY(1.16);transform-origin:0 6.86px;color:#3a3a3a;">СуммаНДС</div><div class="t" style="left:271.20px;top:202.27px;font-size:8.1px;line-height:8.1px;transform:scaleY(1.16);transform-origin:0 6.86px;color:#3a3a3a;">Шар Латекс</div><div class="t" style="left:375.70px;top:202.27px;font-size:8.1px;line-height:8.1px;transform:scaleY(1.16);transform-origin:0 6.86px;color:#3a3a3a;">шт</div><div class="t" style="left:473.30px;top:202.27px;font-size:8.1px;line-height:8.1px;transform:scaleY(1.16);transform-origin:0 6.86px;color:#3a3a3a;width:64.10px;overflow:hidden;text-align:right;">5</div><div class="t" style="left:538.80px;top:202.27px;font-size:8.1px;line-height:8.1px;transform:scaleY(1.16);transform-origin:0 6.86px;color:#3a3a3a;width:67.80px;overflow:hidden;text-align:right;">5</div><div class="t" style="left:610.40px;top:202.27px;font-size:8.1px;line-height:8.1px;transform:scaleY(1.16);transform-origin:0 6.86px;color:#3a3a3a;">Без НДС</div><div class="t" style="left:271.20px;top:212.94px;font-size:8.1px;line-height:8.1px;transform:scaleY(1.16);transform-origin:0 6.86px;color:#3a3a3a;">Дата</div><div class="t" style="left:375.70px;top:212.94px;font-size:8.1px;line-height:8.1px;transform:scaleY(1.16);transform-origin:0 6.86px;color:#3a3a3a;">Номер</div><div class="t" style="left:271.20px;top:223.62px;font-size:8.1px;line-height:8.1px;transform:scaleY(1.16);transform-origin:0 6.86px;color:#3a3a3a;">5/12/2023 6:05:13 PM</div><div class="t" style="left:375.70px;top:223.62px;font-size:8.1px;line-height:8.1px;transform:scaleY(1.16);transform-origin:0 6.86px;color:#3a3a3a;">НФРТ-000002</div><div class="t" style="left:271.20px;top:234.29px;font-size:8.1px;line-height:8.1px;transform:scaleY(1.16);transform-origin:0 6.86px;color:#3a3a3a;">Номенклатура</div><div class="t" style="left:375.70px;top:234.29px;font-size:8.1px;line-height:8.1px;transform:scaleY(1.16);transform-origin:0 6.86px;color:#3a3a3a;">ЕдиницаИзмерения</div><div class="t" style="left:475.70px;top:234.29px;font-size:8.1px;line-height:8.1px;transform:scaleY(1.16);transform-origin:0 6.86px;color:#3a3a3a;">Цена</div><div class="t" style="left:541.20px;top:234.29px;font-size:8.1px;line-height:8.1px;transform:scaleY(1.16);transform-origin:0 6.86px;color:#3a3a3a;">Сумма</div><div class="t" style="left:610.40px;top:234.29px;font-size:8.1px;line-height:8.1px;transform:scaleY(1.16);transform-origin:0 6.86px;color:#3a3a3a;">СтавкаНДС</div><div class="t" style="left:675.70px;top:234.29px;font-size:8.1px;line-height:8.1px;transform:scaleY(1.16);transform-origin:0 6.86px;color:#3a3a3a;">СуммаНДС</div><div class="t" style="left:271.20px;top:511.84px;font-size:8.1px;line-height:8.1px;transform:scaleY(1.16);transform-origin:0 6.86px;color:#3a3a3a;">Дата</div><div class="t" style="left:375.70px;top:511.84px;font-size:8.1px;line-height:8.1px;transform:scaleY(1.16);transform-origin:0 6.86px;color:#3a3a3a;">Номер</div><div class="t" style="left:271.20px;top:522.52px;font-size:8.1px;line-height:8.1px;transform:scaleY(1.16);transform-origin:0 6.86px;color:#3a3a3a;">5/12/2023 6:10:01 PM</div><div class="t" style="left:375.70px;top:522.52px;font-size:8.1px;line-height:8.1px;transform:scaleY(1.16);transform-origin:0 6.86px;color:#3a3a3a;">НФРТ-000003</div><div class="t" style="left:271.20px;top:244.97px;font-size:8.1px;line-height:8.1px;transform:scaleY(1.16);transform-origin:0 6.86px;color:#3a3a3a;">Роза Россия 70 см</div><div class="t" style="left:375.70px;top:244.97px;font-size:8.1px;line-height:8.1px;transform:scaleY(1.16);transform-origin:0 6.86px;color:#3a3a3a;">шт</div><div class="t" style="left:473.30px;top:244.97px;font-size:8.1px;line-height:8.1px;transform:scaleY(1.16);transform-origin:0 6.86px;color:#3a3a3a;width:64.10px;overflow:hidden;text-align:right;">50</div><div class="t" style="left:538.80px;top:244.97px;font-size:8.1px;line-height:8.1px;transform:scaleY(1.16);transform-origin:0 6.86px;color:#3a3a3a;width:67.80px;overflow:hidden;text-align:right;">1,450</div><div class="t" style="left:610.40px;top:244.97px;font-size:8.1px;line-height:8.1px;transform:scaleY(1.16);transform-origin:0 6.86px;color:#3a3a3a;">Без НДС</div><div class="t" style="left:271.20px;top:255.64px;font-size:8.1px;line-height:8.1px;transform:scaleY(1.16);transform-origin:0 6.86px;color:#3a3a3a;">Роза Россия 60 см</div><div class="t" style="left:375.70px;top:255.64px;font-size:8.1px;line-height:8.1px;transform:scaleY(1.16);transform-origin:0 6.86px;color:#3a3a3a;">шт</div><div class="t" style="left:473.30px;top:255.64px;font-size:8.1px;line-height:8.1px;transform:scaleY(1.16);transform-origin:0 6.86px;color:#3a3a3a;width:64.10px;overflow:hidden;text-align:right;">45</div><div class="t" style="left:538.80px;top:255.64px;font-size:8.1px;line-height:8.1px;transform:scaleY(1.16);transform-origin:0 6.86px;color:#3a3a3a;width:67.80px;overflow:hidden;text-align:right;">8,730</div><div class="t" style="left:610.40px;top:255.64px;font-size:8.1px;line-height:8.1px;transform:scaleY(1.16);transform-origin:0 6.86px;color:#3a3a3a;">Без НДС</div><div class="t" style="left:271.20px;top:266.32px;font-size:8.1px;line-height:8.1px;transform:scaleY(1.16);transform-origin:0 6.86px;color:#3a3a3a;">Роза Эквадор 70 см</div><div class="t" style="left:375.70px;top:266.32px;font-size:8.1px;line-height:8.1px;transform:scaleY(1.16);transform-origin:0 6.86px;color:#3a3a3a;">шт</div><div class="t" style="left:473.30px;top:266.32px;font-size:8.1px;line-height:8.1px;transform:scaleY(1.16);transform-origin:0 6.86px;color:#3a3a3a;width:64.10px;overflow:hidden;text-align:right;">118</div><div class="t" style="left:538.80px;top:266.32px;font-size:8.1px;line-height:8.1px;transform:scaleY(1.16);transform-origin:0 6.86px;color:#3a3a3a;width:67.80px;overflow:hidden;text-align:right;">1,888</div><div class="t" style="left:610.40px;top:266.32px;font-size:8.1px;line-height:8.1px;transform:scaleY(1.16);transform-origin:0 6.86px;color:#3a3a3a;">Без НДС</div><div class="t" style="left:271.20px;top:276.99px;font-size:8.1px;line-height:8.1px;transform:scaleY(1.16);transform-origin:0 6.86px;color:#3a3a3a;">Роза Эквадор 60 см</div><div class="t" style="left:375.70px;top:276.99px;font-size:8.1px;line-height:8.1px;transform:scaleY(1.16);transform-origin:0 6.86px;color:#3a3a3a;">шт</div><div class="t" style="left:473.30px;top:276.99px;font-size:8.1px;line-height:8.1px;transform:scaleY(1.16);transform-origin:0 6.86px;color:#3a3a3a;width:64.10px;overflow:hidden;text-align:right;">98</div><div class="t" style="left:538.80px;top:276.99px;font-size:8.1px;line-height:8.1px;transform:scaleY(1.16);transform-origin:0 6.86px;color:#3a3a3a;width:67.80px;overflow:hidden;text-align:right;">3,430</div><div class="t" style="left:610.40px;top:276.99px;font-size:8.1px;line-height:8.1px;transform:scaleY(1.16);transform-origin:0 6.86px;color:#3a3a3a;">Без НДС</div><div class="t" style="left:271.20px;top:287.67px;font-size:8.1px;line-height:8.1px;transform:scaleY(1.16);transform-origin:0 6.86px;color:#3a3a3a;">Роза куст. Фрути 50см</div><div class="t" style="left:375.70px;top:287.67px;font-size:8.1px;line-height:8.1px;transform:scaleY(1.16);transform-origin:0 6.86px;color:#3a3a3a;">шт</div><div class="t" style="left:473.30px;top:287.67px;font-size:8.1px;line-height:8.1px;transform:scaleY(1.16);transform-origin:0 6.86px;color:#3a3a3a;width:64.10px;overflow:hidden;text-align:right;">70</div><div class="t" style="left:538.80px;top:287.67px;font-size:8.1px;line-height:8.1px;transform:scaleY(1.16);transform-origin:0 6.86px;color:#3a3a3a;width:67.80px;overflow:hidden;text-align:right;">3,990</div><div class="t" style="left:610.40px;top:287.67px;font-size:8.1px;line-height:8.1px;transform:scaleY(1.16);transform-origin:0 6.86px;color:#3a3a3a;">Без НДС</div><div class="t" style="left:271.20px;top:298.34px;font-size:8.1px;line-height:8.1px;transform:scaleY(1.16);transform-origin:0 6.86px;color:#3a3a3a;">Роза Куст. Аэробик</div><div class="t" style="left:375.70px;top:298.34px;font-size:8.1px;line-height:8.1px;transform:scaleY(1.16);transform-origin:0 6.86px;color:#3a3a3a;">шт</div><div class="t" style="left:473.30px;top:298.34px;font-size:8.1px;line-height:8.1px;transform:scaleY(1.16);transform-origin:0 6.86px;color:#3a3a3a;width:64.10px;overflow:hidden;text-align:right;">70</div><div class="t" style="left:538.80px;top:298.34px;font-size:8.1px;line-height:8.1px;transform:scaleY(1.16);transform-origin:0 6.86px;color:#3a3a3a;width:67.80px;overflow:hidden;text-align:right;">4,690</div><div class="t" style="left:610.40px;top:298.34px;font-size:8.1px;line-height:8.1px;transform:scaleY(1.16);transform-origin:0 6.86px;color:#3a3a3a;">Без НДС</div><div class="t" style="left:271.20px;top:309.02px;font-size:8.1px;line-height:8.1px;transform:scaleY(1.16);transform-origin:0 6.86px;color:#3a3a3a;">Гиперикум</div><div class="t" style="left:375.70px;top:309.02px;font-size:8.1px;line-height:8.1px;transform:scaleY(1.16);transform-origin:0 6.86px;color:#3a3a3a;">шт</div><div class="t" style="left:473.30px;top:309.02px;font-size:8.1px;line-height:8.1px;transform:scaleY(1.16);transform-origin:0 6.86px;color:#3a3a3a;width:64.10px;overflow:hidden;text-align:right;">70</div><div class="t" style="left:538.80px;top:309.02px;font-size:8.1px;line-height:8.1px;transform:scaleY(1.16);transform-origin:0 6.86px;color:#3a3a3a;width:67.80px;overflow:hidden;text-align:right;">1,050</div><div class="t" style="left:610.40px;top:309.02px;font-size:8.1px;line-height:8.1px;transform:scaleY(1.16);transform-origin:0 6.86px;color:#3a3a3a;">Без НДС</div><div class="t" style="left:271.20px;top:319.69px;font-size:8.1px;line-height:8.1px;transform:scaleY(1.16);transform-origin:0 6.86px;color:#3a3a3a;">Лилия</div><div class="t" style="left:375.70px;top:319.69px;font-size:8.1px;line-height:8.1px;transform:scaleY(1.16);transform-origin:0 6.86px;color:#3a3a3a;">шт</div><div class="t" style="left:473.30px;top:319.69px;font-size:8.1px;line-height:8.1px;transform:scaleY(1.16);transform-origin:0 6.86px;color:#3a3a3a;width:64.10px;overflow:hidden;text-align:right;">169.99</div><div class="t" style="left:538.80px;top:319.69px;font-size:8.1px;line-height:8.1px;transform:scaleY(1.16);transform-origin:0 6.86px;color:#3a3a3a;width:67.80px;overflow:hidden;text-align:right;">1,699.9</div><div class="t" style="left:610.40px;top:319.69px;font-size:8.1px;line-height:8.1px;transform:scaleY(1.16);transform-origin:0 6.86px;color:#3a3a3a;">Без НДС</div><div class="t" style="left:271.20px;top:330.37px;font-size:8.1px;line-height:8.1px;transform:scaleY(1.16);transform-origin:0 6.86px;color:#3a3a3a;">Гербера</div><div class="t" style="left:375.70px;top:330.37px;font-size:8.1px;line-height:8.1px;transform:scaleY(1.16);transform-origin:0 6.86px;color:#3a3a3a;">шт</div><div class="t" style="left:473.30px;top:330.37px;font-size:8.1px;line-height:8.1px;transform:scaleY(1.16);transform-origin:0 6.86px;color:#3a3a3a;width:64.10px;overflow:hidden;text-align:right;">59</div><div class="t" style="left:538.80px;top:330.37px;font-size:8.1px;line-height:8.1px;transform:scaleY(1.16);transform-origin:0 6.86px;color:#3a3a3a;width:67.80px;overflow:hidden;text-align:right;">472</div><div class="t" style="left:610.40px;top:330.37px;font-size:8.1px;line-height:8.1px;transform:scaleY(1.16);transform-origin:0 6.86px;color:#3a3a3a;">Без НДС</div><div class="t" style="left:271.20px;top:341.04px;font-size:8.1px;line-height:8.1px;transform:scaleY(1.16);transform-origin:0 6.86px;color:#3a3a3a;">Танацетум</div><div class="t" style="left:375.70px;top:341.04px;font-size:8.1px;line-height:8.1px;transform:scaleY(1.16);transform-origin:0 6.86px;color:#3a3a3a;">шт</div><div class="t" style="left:473.30px;top:341.04px;font-size:8.1px;line-height:8.1px;transform:scaleY(1.16);transform-origin:0 6.86px;color:#3a3a3a;width:64.10px;overflow:hidden;text-align:right;">86</div><div class="t" style="left:538.80px;top:341.04px;font-size:8.1px;line-height:8.1px;transform:scaleY(1.16);transform-origin:0 6.86px;color:#3a3a3a;width:67.80px;overflow:hidden;text-align:right;">1,290</div><div class="t" style="left:610.40px;top:341.04px;font-size:8.1px;line-height:8.1px;transform:scaleY(1.16);transform-origin:0 6.86px;color:#3a3a3a;">Без НДС</div><div class="t" style="left:271.20px;top:351.72px;font-size:8.1px;line-height:8.1px;transform:scaleY(1.16);transform-origin:0 6.86px;color:#3a3a3a;">Аллиум</div><div class="t" style="left:375.70px;top:351.72px;font-size:8.1px;line-height:8.1px;transform:scaleY(1.16);transform-origin:0 6.86px;color:#3a3a3a;">шт</div><div class="t" style="left:473.30px;top:351.72px;font-size:8.1px;line-height:8.1px;transform:scaleY(1.16);transform-origin:0 6.86px;color:#3a3a3a;width:64.10px;overflow:hidden;text-align:right;">64</div><div class="t" style="left:538.80px;top:351.72px;font-size:8.1px;line-height:8.1px;transform:scaleY(1.16);transform-origin:0 6.86px;color:#3a3a3a;width:67.80px;overflow:hidden;text-align:right;">512</div><div class="t" style="left:610.40px;top:351.72px;font-size:8.1px;line-height:8.1px;transform:scaleY(1.16);transform-origin:0 6.86px;color:#3a3a3a;">Без НДС</div><div class="t" style="left:271.20px;top:362.39px;font-size:8.1px;line-height:8.1px;transform:scaleY(1.16);transform-origin:0 6.86px;color:#3a3a3a;">Гортензия</div><div class="t" style="left:375.70px;top:362.39px;font-size:8.1px;line-height:8.1px;transform:scaleY(1.16);transform-origin:0 6.86px;color:#3a3a3a;">шт</div><div class="t" style="left:473.30px;top:362.39px;font-size:8.1px;line-height:8.1px;transform:scaleY(1.16);transform-origin:0 6.86px;color:#3a3a3a;width:64.10px;overflow:hidden;text-align:right;">195</div><div class="t" style="left:538.80px;top:362.39px;font-size:8.1px;line-height:8.1px;transform:scaleY(1.16);transform-origin:0 6.86px;color:#3a3a3a;width:67.80px;overflow:hidden;text-align:right;">585</div><div class="t" style="left:610.40px;top:362.39px;font-size:8.1px;line-height:8.1px;transform:scaleY(1.16);transform-origin:0 6.86px;color:#3a3a3a;">Без НДС</div><div class="t" style="left:271.20px;top:373.07px;font-size:8.1px;line-height:8.1px;transform:scaleY(1.16);transform-origin:0 6.86px;color:#3a3a3a;">Тюльпан пионовидный</div><div class="t" style="left:375.70px;top:373.07px;font-size:8.1px;line-height:8.1px;transform:scaleY(1.16);transform-origin:0 6.86px;color:#3a3a3a;">шт</div><div class="t" style="left:473.30px;top:373.07px;font-size:8.1px;line-height:8.1px;transform:scaleY(1.16);transform-origin:0 6.86px;color:#3a3a3a;width:64.10px;overflow:hidden;text-align:right;">43</div><div class="t" style="left:538.80px;top:373.07px;font-size:8.1px;line-height:8.1px;transform:scaleY(1.16);transform-origin:0 6.86px;color:#3a3a3a;width:67.80px;overflow:hidden;text-align:right;">946</div><div class="t" style="left:610.40px;top:373.07px;font-size:8.1px;line-height:8.1px;transform:scaleY(1.16);transform-origin:0 6.86px;color:#3a3a3a;">Без НДС</div><div class="t" style="left:271.20px;top:383.74px;font-size:8.1px;line-height:8.1px;transform:scaleY(1.16);transform-origin:0 6.86px;color:#3a3a3a;">Нарцис</div><div class="t" style="left:375.70px;top:383.74px;font-size:8.1px;line-height:8.1px;transform:scaleY(1.16);transform-origin:0 6.86px;color:#3a3a3a;">шт</div><div class="t" style="left:473.30px;top:383.74px;font-size:8.1px;line-height:8.1px;transform:scaleY(1.16);transform-origin:0 6.86px;color:#3a3a3a;width:64.10px;overflow:hidden;text-align:right;">55</div><div class="t" style="left:538.80px;top:383.74px;font-size:8.1px;line-height:8.1px;transform:scaleY(1.16);transform-origin:0 6.86px;color:#3a3a3a;width:67.80px;overflow:hidden;text-align:right;">110</div><div class="t" style="left:610.40px;top:383.74px;font-size:8.1px;line-height:8.1px;transform:scaleY(1.16);transform-origin:0 6.86px;color:#3a3a3a;">Без НДС</div><div class="t" style="left:271.20px;top:394.42px;font-size:8.1px;line-height:8.1px;transform:scaleY(1.16);transform-origin:0 6.86px;color:#3a3a3a;">Пион</div><div class="t" style="left:375.70px;top:394.42px;font-size:8.1px;line-height:8.1px;transform:scaleY(1.16);transform-origin:0 6.86px;color:#3a3a3a;">шт</div><div class="t" style="left:473.30px;top:394.42px;font-size:8.1px;line-height:8.1px;transform:scaleY(1.16);transform-origin:0 6.86px;color:#3a3a3a;width:64.10px;overflow:hidden;text-align:right;">249.99</div><div class="t" style="left:538.80px;top:394.42px;font-size:8.1px;line-height:8.1px;transform:scaleY(1.16);transform-origin:0 6.86px;color:#3a3a3a;width:67.80px;overflow:hidden;text-align:right;">4,749.81</div><div class="t" style="left:610.40px;top:394.42px;font-size:8.1px;line-height:8.1px;transform:scaleY(1.16);transform-origin:0 6.86px;color:#3a3a3a;">Без НДС</div><div class="t" style="left:271.20px;top:405.09px;font-size:8.1px;line-height:8.1px;transform:scaleY(1.16);transform-origin:0 6.86px;color:#3a3a3a;">Хризантема куст</div><div class="t" style="left:375.70px;top:405.09px;font-size:8.1px;line-height:8.1px;transform:scaleY(1.16);transform-origin:0 6.86px;color:#3a3a3a;">шт</div><div class="t" style="left:473.30px;top:405.09px;font-size:8.1px;line-height:8.1px;transform:scaleY(1.16);transform-origin:0 6.86px;color:#3a3a3a;width:64.10px;overflow:hidden;text-align:right;">79.99</div><div class="t" style="left:538.80px;top:405.09px;font-size:8.1px;line-height:8.1px;transform:scaleY(1.16);transform-origin:0 6.86px;color:#3a3a3a;width:67.80px;overflow:hidden;text-align:right;">2,239.72</div><div class="t" style="left:610.40px;top:405.09px;font-size:8.1px;line-height:8.1px;transform:scaleY(1.16);transform-origin:0 6.86px;color:#3a3a3a;">Без НДС</div><div class="t" style="left:271.20px;top:415.77px;font-size:8.1px;line-height:8.1px;transform:scaleY(1.16);transform-origin:0 6.86px;color:#3a3a3a;">Ирис Белый</div><div class="t" style="left:375.70px;top:415.77px;font-size:8.1px;line-height:8.1px;transform:scaleY(1.16);transform-origin:0 6.86px;color:#3a3a3a;">шт</div><div class="t" style="left:473.30px;top:415.77px;font-size:8.1px;line-height:8.1px;transform:scaleY(1.16);transform-origin:0 6.86px;color:#3a3a3a;width:64.10px;overflow:hidden;text-align:right;">68</div><div class="t" style="left:538.80px;top:415.77px;font-size:8.1px;line-height:8.1px;transform:scaleY(1.16);transform-origin:0 6.86px;color:#3a3a3a;width:67.80px;overflow:hidden;text-align:right;">1,428</div><div class="t" style="left:610.40px;top:415.77px;font-size:8.1px;line-height:8.1px;transform:scaleY(1.16);transform-origin:0 6.86px;color:#3a3a3a;">Без НДС</div><div class="t" style="left:271.20px;top:426.44px;font-size:8.1px;line-height:8.1px;transform:scaleY(1.16);transform-origin:0 6.86px;color:#3a3a3a;">Роза Кения 40 см</div><div class="t" style="left:375.70px;top:426.44px;font-size:8.1px;line-height:8.1px;transform:scaleY(1.16);transform-origin:0 6.86px;color:#3a3a3a;">шт</div><div class="t" style="left:473.30px;top:426.44px;font-size:8.1px;line-height:8.1px;transform:scaleY(1.16);transform-origin:0 6.86px;color:#3a3a3a;width:64.10px;overflow:hidden;text-align:right;">35</div><div class="t" style="left:538.80px;top:426.44px;font-size:8.1px;line-height:8.1px;transform:scaleY(1.16);transform-origin:0 6.86px;color:#3a3a3a;width:67.80px;overflow:hidden;text-align:right;">560</div><div class="t" style="left:610.40px;top:426.44px;font-size:8.1px;line-height:8.1px;transform:scaleY(1.16);transform-origin:0 6.86px;color:#3a3a3a;">Без НДС</div><div class="t" style="left:271.20px;top:437.12px;font-size:8.1px;line-height:8.1px;transform:scaleY(1.16);transform-origin:0 6.86px;color:#3a3a3a;">Альстромерия</div><div class="t" style="left:375.70px;top:437.12px;font-size:8.1px;line-height:8.1px;transform:scaleY(1.16);transform-origin:0 6.86px;color:#3a3a3a;">шт</div><div class="t" style="left:473.30px;top:437.12px;font-size:8.1px;line-height:8.1px;transform:scaleY(1.16);transform-origin:0 6.86px;color:#3a3a3a;width:64.10px;overflow:hidden;text-align:right;">65</div><div class="t" style="left:538.80px;top:437.12px;font-size:8.1px;line-height:8.1px;transform:scaleY(1.16);transform-origin:0 6.86px;color:#3a3a3a;width:67.80px;overflow:hidden;text-align:right;">1,170</div><div class="t" style="left:610.40px;top:437.12px;font-size:8.1px;line-height:8.1px;transform:scaleY(1.16);transform-origin:0 6.86px;color:#3a3a3a;">Без НДС</div><div class="t" style="left:271.20px;top:447.79px;font-size:8.1px;line-height:8.1px;transform:scaleY(1.16);transform-origin:0 6.86px;color:#3a3a3a;">Хризантема одн.</div><div class="t" style="left:375.70px;top:447.79px;font-size:8.1px;line-height:8.1px;transform:scaleY(1.16);transform-origin:0 6.86px;color:#3a3a3a;">шт</div><div class="t" style="left:473.30px;top:447.79px;font-size:8.1px;line-height:8.1px;transform:scaleY(1.16);transform-origin:0 6.86px;color:#3a3a3a;width:64.10px;overflow:hidden;text-align:right;">145</div><div class="t" style="left:538.80px;top:447.79px;font-size:8.1px;line-height:8.1px;transform:scaleY(1.16);transform-origin:0 6.86px;color:#3a3a3a;width:67.80px;overflow:hidden;text-align:right;">290</div><div class="t" style="left:610.40px;top:447.79px;font-size:8.1px;line-height:8.1px;transform:scaleY(1.16);transform-origin:0 6.86px;color:#3a3a3a;">Без НДС</div><div class="t" style="left:271.20px;top:458.47px;font-size:8.1px;line-height:8.1px;transform:scaleY(1.16);transform-origin:0 6.86px;color:#3a3a3a;">Гвоздика</div><div class="t" style="left:375.70px;top:458.47px;font-size:8.1px;line-height:8.1px;transform:scaleY(1.16);transform-origin:0 6.86px;color:#3a3a3a;">шт</div><div class="t" style="left:473.30px;top:458.47px;font-size:8.1px;line-height:8.1px;transform:scaleY(1.16);transform-origin:0 6.86px;color:#3a3a3a;width:64.10px;overflow:hidden;text-align:right;">48</div><div class="t" style="left:538.80px;top:458.47px;font-size:8.1px;line-height:8.1px;transform:scaleY(1.16);transform-origin:0 6.86px;color:#3a3a3a;width:67.80px;overflow:hidden;text-align:right;">5,088</div><div class="t" style="left:610.40px;top:458.47px;font-size:8.1px;line-height:8.1px;transform:scaleY(1.16);transform-origin:0 6.86px;color:#3a3a3a;">Без НДС</div><div class="t" style="left:271.20px;top:469.14px;font-size:8.1px;line-height:8.1px;transform:scaleY(1.16);transform-origin:0 6.86px;color:#3a3a3a;">Протея &quot;Сильвия&quot;</div><div class="t" style="left:375.70px;top:469.14px;font-size:8.1px;line-height:8.1px;transform:scaleY(1.16);transform-origin:0 6.86px;color:#3a3a3a;">шт</div><div class="t" style="left:473.30px;top:469.14px;font-size:8.1px;line-height:8.1px;transform:scaleY(1.16);transform-origin:0 6.86px;color:#3a3a3a;width:64.10px;overflow:hidden;text-align:right;">250</div><div class="t" style="left:538.80px;top:469.14px;font-size:8.1px;line-height:8.1px;transform:scaleY(1.16);transform-origin:0 6.86px;color:#3a3a3a;width:67.80px;overflow:hidden;text-align:right;">750</div><div class="t" style="left:610.40px;top:469.14px;font-size:8.1px;line-height:8.1px;transform:scaleY(1.16);transform-origin:0 6.86px;color:#3a3a3a;">Без НДС</div><div class="t" style="left:271.20px;top:479.82px;font-size:8.1px;line-height:8.1px;transform:scaleY(1.16);transform-origin:0 6.86px;color:#3a3a3a;">Хамилациум</div><div class="t" style="left:375.70px;top:479.82px;font-size:8.1px;line-height:8.1px;transform:scaleY(1.16);transform-origin:0 6.86px;color:#3a3a3a;">шт</div><div class="t" style="left:473.30px;top:479.82px;font-size:8.1px;line-height:8.1px;transform:scaleY(1.16);transform-origin:0 6.86px;color:#3a3a3a;width:64.10px;overflow:hidden;text-align:right;">113</div><div class="t" style="left:538.80px;top:479.82px;font-size:8.1px;line-height:8.1px;transform:scaleY(1.16);transform-origin:0 6.86px;color:#3a3a3a;width:67.80px;overflow:hidden;text-align:right;">678</div><div class="t" style="left:610.40px;top:479.82px;font-size:8.1px;line-height:8.1px;transform:scaleY(1.16);transform-origin:0 6.86px;color:#3a3a3a;">Без НДС</div><div class="t" style="left:271.20px;top:490.49px;font-size:8.1px;line-height:8.1px;transform:scaleY(1.16);transform-origin:0 6.86px;color:#3a3a3a;">Бруния</div><div class="t" style="left:375.70px;top:490.49px;font-size:8.1px;line-height:8.1px;transform:scaleY(1.16);transform-origin:0 6.86px;color:#3a3a3a;">шт</div><div class="t" style="left:473.30px;top:490.49px;font-size:8.1px;line-height:8.1px;transform:scaleY(1.16);transform-origin:0 6.86px;color:#3a3a3a;width:64.10px;overflow:hidden;text-align:right;">98</div><div class="t" style="left:538.80px;top:490.49px;font-size:8.1px;line-height:8.1px;transform:scaleY(1.16);transform-origin:0 6.86px;color:#3a3a3a;width:67.80px;overflow:hidden;text-align:right;">3,332</div><div class="t" style="left:610.40px;top:490.49px;font-size:8.1px;line-height:8.1px;transform:scaleY(1.16);transform-origin:0 6.86px;color:#3a3a3a;">Без НДС</div><div class="t" style="left:271.20px;top:501.17px;font-size:8.1px;line-height:8.1px;transform:scaleY(1.16);transform-origin:0 6.86px;color:#3a3a3a;">Роза куст. Бомбастик</div><div class="t" style="left:375.70px;top:501.17px;font-size:8.1px;line-height:8.1px;transform:scaleY(1.16);transform-origin:0 6.86px;color:#3a3a3a;">шт</div><div class="t" style="left:473.30px;top:501.17px;font-size:8.1px;line-height:8.1px;transform:scaleY(1.16);transform-origin:0 6.86px;color:#3a3a3a;width:64.10px;overflow:hidden;text-align:right;">65</div><div class="t" style="left:538.80px;top:501.17px;font-size:8.1px;line-height:8.1px;transform:scaleY(1.16);transform-origin:0 6.86px;color:#3a3a3a;width:67.80px;overflow:hidden;text-align:right;">3,900</div><div class="t" style="left:610.40px;top:501.17px;font-size:8.1px;line-height:8.1px;transform:scaleY(1.16);transform-origin:0 6.86px;color:#3a3a3a;">Без НДС</div></body></html>
